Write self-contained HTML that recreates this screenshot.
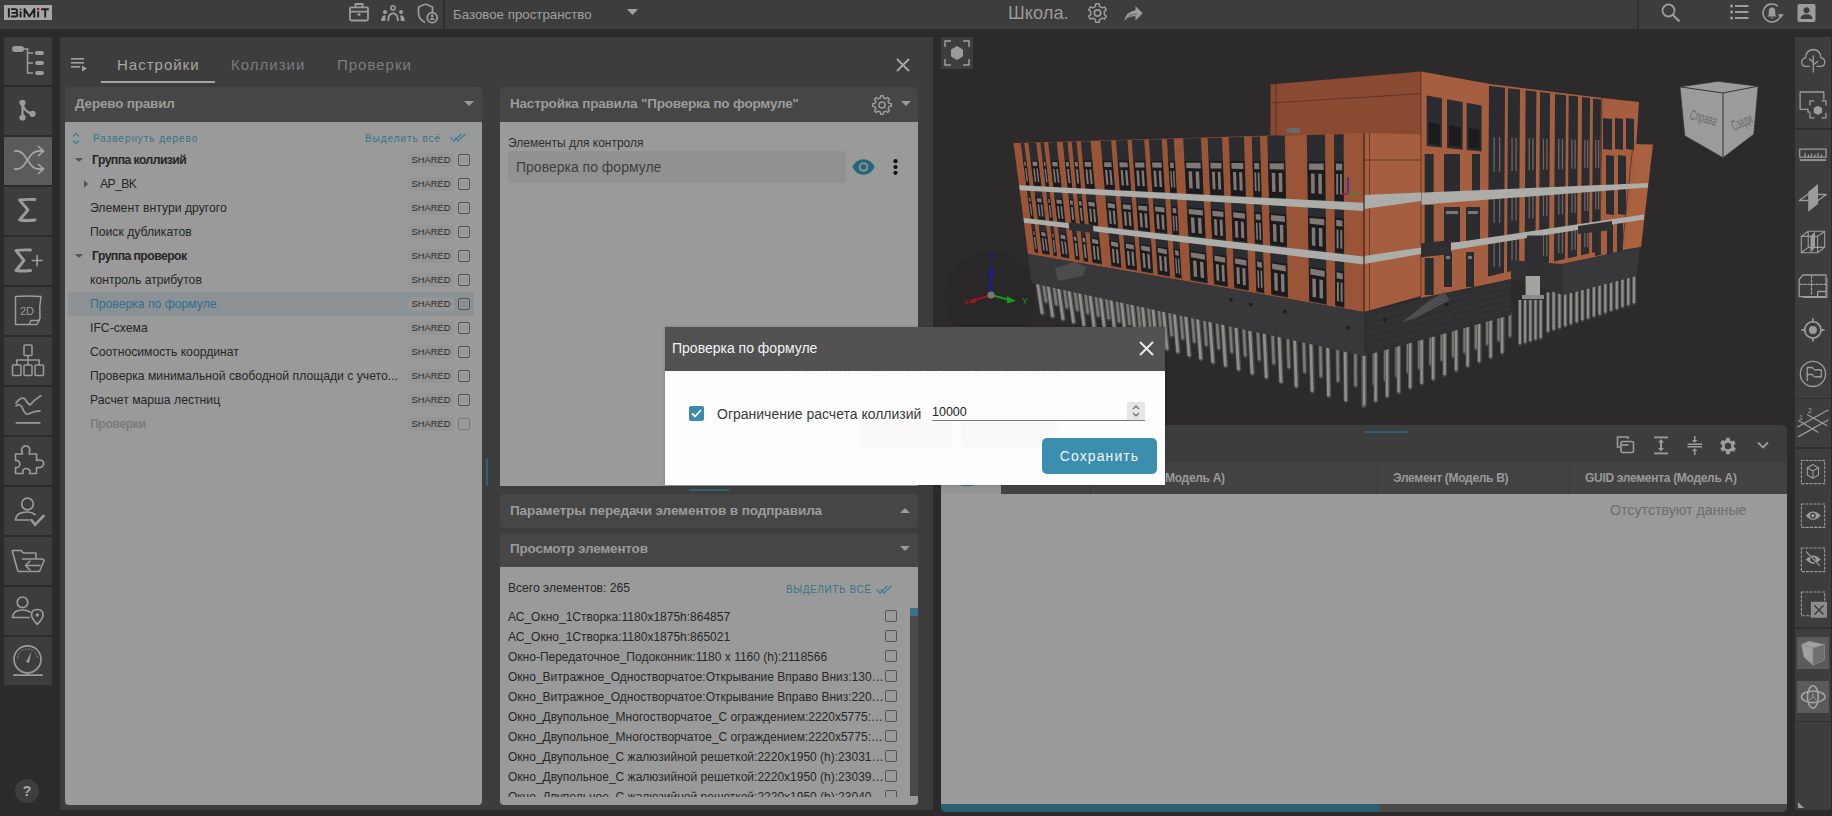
<!DOCTYPE html>
<html><head><meta charset="utf-8">
<style>
*{box-sizing:border-box;margin:0;padding:0}
html,body{width:1832px;height:816px;overflow:hidden;background:#2d2a2c;font-family:"Liberation Sans",sans-serif;position:relative}
.a{position:absolute}
svg{position:absolute;overflow:visible}
#top{left:0;top:0;width:1832px;height:29px;background:#3d3d3d}
.sb{position:absolute;left:4px;width:48px;height:48px;background:#3d3d3d}
.sb.on{background:#5b5b5b}
#main{left:60px;top:37px;width:873px;height:773px;background:#3d3d3d}
.ph{position:absolute;background:#464646;border-radius:4px 4px 0 0}
.pb{position:absolute;background:#9a9a9a}
.pt{position:absolute;font-weight:bold;font-size:13.5px;color:#9c9c9c;white-space:nowrap;letter-spacing:-0.2px}
#tree{left:0;top:0}
.row{position:absolute;left:68px;width:406px;height:24px}
.row.sel{background:#8c9195}
.row .t{position:absolute;left:22px;top:5px;font-size:12.2px;color:#262626;white-space:nowrap}
.row.grp .t{left:24px;font-weight:bold;letter-spacing:-0.55px}
.row.sub .t{left:32px;letter-spacing:-0.6px}
.row.sel .t{color:#317087}
.row.dis .t{color:#7b7b7b;font-weight:bold;letter-spacing:-0.4px}
.tri{position:absolute;width:0;height:0}
.tri.d{left:7px;top:10px;border-left:4px solid transparent;border-right:4px solid transparent;border-top:4px solid #555}
.tri.r{left:16px;top:8px;border-top:4px solid transparent;border-bottom:4px solid transparent;border-left:4px solid #555}
.chip{position:absolute;left:340px;top:5px;width:46px;height:14px;border-radius:4px;background:#959595;font-size:9.3px;color:#2a2a2a;text-align:center;line-height:15.5px;letter-spacing:0.05px}
.cb{position:absolute;left:390px;top:6px;width:12px;height:12px;border:1.5px solid #555;border-radius:2px}
.row.dis .cb{border-color:#777}
#list{left:0;top:0}
.li{position:absolute;left:508px;width:376px;overflow:hidden;text-overflow:ellipsis;font-size:12px;color:#262626;white-space:nowrap;line-height:16px}
.lcb{position:absolute;left:885px;width:12px;height:12px;border:1.5px solid #555;border-radius:2px}
.rb{position:absolute;left:1795px;width:37px;background:#3d3d3d}

</style></head><body>
<div id="top" class="a"></div>
<div class="sb" style="top:37px"></div><div class="sb" style="top:87px"></div><div class="sb on" style="top:137px"></div><div class="sb" style="top:187px"></div><div class="sb" style="top:237px"></div><div class="sb" style="top:287px"></div><div class="sb" style="top:337px"></div><div class="sb" style="top:387px"></div><div class="sb" style="top:437px"></div><div class="sb" style="top:487px"></div><div class="sb" style="top:537px"></div><div class="sb" style="top:587px"></div><div class="sb" style="top:637px"></div>
<div class="a" style="left:4px;top:5px;width:48px;height:15px;background:#a5a5a5"></div>
<svg style="left:4px;top:5px" width="48" height="15" viewBox="0 0 48 15"><g fill="none" stroke="#1e1e1e" stroke-width="1.9" stroke-linejoin="round"><path d="M4.85 3.2V12.4"/><path d="M7 4.1H11.3Q13 4.1 13 6Q13 7.9 11.3 7.9H7.6M7.6 7.9H11.6Q13.3 7.9 13.3 10Q13.3 11.5 11.6 11.5H7"/><path d="M16.6 6.3V12.4"/><path d="M20.5 12.4V4L25.4 11.6L30.3 4V12.4"/><path d="M34.15 6.3V12.4"/><path d="M37.2 4.3H44.9M41.2 4.3V12.4"/></g><rect x="15.7" y="3.7" width="1.8" height="1.3" fill="#1e1e1e"/><rect x="33.1" y="3" width="2.1" height="2.1" fill="#b00000"/></svg>
<svg style="left:349px;top:3px" width="20" height="19" viewBox="0 0 20 19"><g fill="none" stroke="#9c9c9c" stroke-width="1.8"><rect x="1" y="4.3" width="18" height="13.2" rx="1.2"/><path d="M6.5 4.3V1H13.5V4.3M1 8.7H19"/></g><rect x="8.6" y="10.3" width="2.8" height="2.4" fill="#9c9c9c"/></svg>
<svg style="left:381px;top:4px" width="25" height="18" viewBox="0 0 25 18"><g fill="#9c9c9c"><circle cx="12" cy="3.9" r="2.1" fill="none" stroke="#9c9c9c" stroke-width="1.6"/><circle cx="4" cy="8.1" r="2"/><circle cx="20" cy="8.1" r="2"/><path d="M6.2 16.9Q6.2 8.4 12 8.4Q17.8 8.4 17.8 16.9H15.9Q15.9 10.3 12 10.3Q8.1 10.3 8.1 16.9Z"/><path d="M0.3 16.9Q0.3 12 3.5 11.3L4.8 11.8Q4.2 13.5 4.2 16.9Z"/><path d="M23.7 16.9Q23.7 12 20.5 11.3L19.2 11.8Q19.8 13.5 19.8 16.9Z"/></g></svg>
<svg style="left:417px;top:3px" width="22" height="21" viewBox="0 0 22 21"><g fill="none" stroke="#9c9c9c" stroke-width="1.7"><path d="M8.5 1L1.5 4V10Q1.5 16 8 19.5"/><path d="M8.5 1L15.5 4V9"/><circle cx="15.2" cy="14.7" r="5"/></g><g fill="#9c9c9c"><circle cx="15.2" cy="13" r="1.4"/><path d="M12.6 17Q12.8 14.9 15.2 14.9Q17.6 14.9 17.8 17Z"/></g></svg>
<div class="a" style="left:443px;top:0;width:2px;height:29px;background:#303030"></div>
<div class="a" style="left:453px;top:6.7px;font-size:13.3px;color:#a0a0a0">Базовое пространство</div>
<svg style="left:627px;top:9px" width="11" height="7"><path d="M0 0H11L5.5 6Z" fill="#a0a0a0"/></svg>
<div class="a" style="left:1008px;top:2px;font-size:18.3px;color:#9a9a9a">Школа.</div>
<svg style="left:1087px;top:3px" width="21" height="20" viewBox="0 0 20 20"><path d="M7.95 3.31L8.23 0.87L11.77 0.87L12.05 3.31L14.77 4.88L17.02 3.90L18.79 6.97L16.82 8.43L16.82 11.57L18.79 13.03L17.02 16.10L14.77 15.12L12.05 16.69L11.77 19.13L8.23 19.13L7.95 16.69L5.23 15.12L2.98 16.10L1.21 13.03L3.18 11.57L3.18 8.43L1.21 6.97L2.98 3.90L5.23 4.88Z" fill="none" stroke="#9c9c9c" stroke-width="1.5" stroke-linejoin="round"/><circle cx="10" cy="10" r="3.2" fill="none" stroke="#9c9c9c" stroke-width="1.7"/></svg>
<svg style="left:1124px;top:6px" width="19" height="15" viewBox="0 0 19 15"><path d="M11.5 0L18.7 7.2L11.5 14.5V10.3Q4 10 0.3 15Q2 5.5 11.5 4.2Z" fill="#9c9c9c"/><path d="M3 12Q6 8 13 8.3" stroke="#555" stroke-width="0.8" fill="none"/></svg>
<div class="a" style="left:1637px;top:0;width:2px;height:29px;background:#303030"></div>
<svg style="left:1661px;top:3px" width="20" height="20" viewBox="0 0 20 20"><g fill="none" stroke="#9c9c9c" stroke-width="1.8"><circle cx="7.5" cy="7.5" r="6"/><path d="M12 12L18.5 18.5" stroke-width="2.2"/></g></svg>
<svg style="left:1730px;top:4px" width="19" height="17" viewBox="0 0 19 17"><g fill="#9c9c9c"><circle cx="1.6" cy="2" r="1.5"/><circle cx="1.6" cy="8" r="1.5"/><circle cx="1.6" cy="14" r="1.5"/><rect x="5" y="1" width="13.5" height="2"/><rect x="5" y="7" width="13.5" height="2"/><rect x="5" y="13" width="13.5" height="2"/></g></svg>
<svg style="left:1762px;top:3px" width="22" height="20" viewBox="0 0 22 20"><path d="M15.8 3.1A9 9 0 1 0 18.9 11.6" fill="none" stroke="#9c9c9c" stroke-width="1.6"/><path d="M15.6 11.3H22L18.8 15.2Z" fill="#9c9c9c"/><path d="M10 4.3Q6.7 4.8 6.7 8.5V12L5.3 13.5H14.7L13.3 12V8.5Q13.3 4.8 10 4.3ZM8.7 14.4Q9 15.6 10 15.6Q11 15.6 11.3 14.4Z" fill="#9c9c9c"/></svg>
<svg style="left:1797px;top:4px" width="19" height="18" viewBox="0 0 19 18"><rect x="0.5" y="0" width="18" height="18" rx="2" fill="#9c9c9c"/><circle cx="9.5" cy="6.3" r="3" fill="#3d3d3d"/><path d="M3.5 15Q3.5 10.3 9.5 10.3Q15.5 10.3 15.5 15Z" fill="#3d3d3d"/></svg>

<svg style="left:4px;top:37px" width="48" height="48" viewBox="0 0 48 48"><g fill="#9b9b9b" stroke="#9b9b9b"><rect x="8" y="9" width="12" height="6" rx="3" stroke="none"/><path d="M19 12H23.5V36.5M23.5 16H29M23.5 26H29M23.5 36H29" fill="none" stroke-width="1.6"/><rect x="31" y="14" width="9" height="4" rx="2" stroke="none"/><rect x="31" y="24" width="9" height="4" rx="2" stroke="none"/><rect x="31" y="34" width="9" height="4" rx="2" stroke="none"/></g></svg>
<svg style="left:4px;top:87px" width="48" height="48" viewBox="0 0 48 48"><g fill="#9b9b9b" stroke="#9b9b9b" stroke-width="2.2"><path d="M18.5 16V30.5M18.5 17Q20 25 28.6 26.8" fill="none"/><circle cx="18.5" cy="15.8" r="3.1" stroke="none"/><circle cx="18.5" cy="30.5" r="3.1" stroke="none"/><circle cx="28.6" cy="26.8" r="3.1" stroke="none"/></g></svg>
<svg style="left:4px;top:137px" width="48" height="48" viewBox="0 0 48 48"><g fill="none" stroke="#a9a9a9" stroke-width="1.6"><path d="M10 14Q16 13 20 18L27 28Q31 33 39 32M10 32Q16 33 20 28L27 18Q31 13 39 14M34 9L39.5 14L34 19M34 27L39.5 32L34 37"/></g></svg>
<svg style="left:4px;top:187px" width="48" height="48" viewBox="0 0 48 48"><path d="M15.5 13Q23 12 31 12.5M15.5 13L24 23L15.5 33Q23 34 31 33" fill="none" stroke="#9b9b9b" stroke-width="2.9" stroke-linecap="round" stroke-linejoin="round"/></svg>
<svg style="left:4px;top:237px" width="48" height="48" viewBox="0 0 48 48"><g fill="none" stroke="#9b9b9b" stroke-linecap="round" stroke-linejoin="round"><path d="M12 13.5Q19 12.5 26.5 13M12 13.5L20 23.5L12 33.5Q19 34.5 26.5 33.5" stroke-width="2.9"/><path d="M28.5 23.5H38M33.2 18.5V28.5" stroke-width="1.7"/></g></svg>
<svg style="left:4px;top:287px" width="48" height="48" viewBox="0 0 48 48"><g fill="none" stroke="#9b9b9b" stroke-width="1.5"><path d="M11.5 9.5Q24 8.5 37 9.5Q35 20 36 31L33 37.5H11.5Z"/><path d="M25 37.5L27 33.5H36" /></g><text x="16" y="28" font-family="Liberation Sans" font-size="11" fill="#9b9b9b">2D</text></svg>
<svg style="left:4px;top:337px" width="48" height="48" viewBox="0 0 48 48"><g fill="none" stroke="#9b9b9b" stroke-width="1.5"><rect x="20" y="8" width="8" height="10.5" rx="1"/><rect x="8.5" y="28" width="8.5" height="10.5" rx="1"/><rect x="20" y="28" width="8" height="10.5" rx="1"/><rect x="31" y="28" width="8.5" height="10.5" rx="1"/><path d="M24 18.5V28M12.7 28V23H35.2V28"/></g></svg>
<svg style="left:4px;top:387px" width="48" height="48" viewBox="0 0 48 48"><g fill="none" stroke="#9b9b9b" stroke-width="1.7" stroke-linecap="round"><path d="M12 16.2Q17 9 21 12Q24 17 26 18Q30 13 37 8.6M12 19Q15 16 18 20Q21 28 24 27Q30 24 36 23.8M12.3 35.8H35.8"/></g></svg>
<svg style="left:4px;top:437px" width="48" height="48" viewBox="0 0 48 48"><path d="M11.5 17H18.5Q17 13 18 11Q20 8.5 23 9Q26 10 25.8 13.5Q25 15.5 25 17H32.5V23.5Q36 22.5 38.5 23.8Q40.5 26 39 29Q37.5 31 32.5 30.5V36.5H25.5Q26.5 33 25 32.5Q22 30.5 19.5 32.5Q18.5 34 19 36.5H11.5V30.5Q14.5 31 15.5 29Q16.5 26 14.5 24Q12.5 23 11.5 23.5Z" fill="none" stroke="#9b9b9b" stroke-width="1.6" stroke-linejoin="round"/></svg>
<svg style="left:4px;top:487px" width="48" height="48" viewBox="0 0 48 48"><g fill="none" stroke="#9b9b9b" stroke-width="1.7" stroke-linecap="round"><circle cx="23.5" cy="17" r="5.8"/><path d="M11.5 33Q12 25 23.5 25Q28 25 31 27.5M11.5 33H25"/><path d="M27.5 33L31 37.8L39.5 29" stroke-width="2.6"/></g></svg>
<svg style="left:4px;top:537px" width="48" height="48" viewBox="0 0 48 48"><g fill="none" stroke="#9b9b9b" stroke-width="1.6" stroke-linejoin="round"><path d="M14 34.5L8.5 15V13.5H17L19.5 16H32V21.5M14 34.5H35.5L40 24Q40 22 38 22H18"/><path d="M36 28.5H21.5M26 24L21.5 28.5L26 33" stroke-linecap="round"/></g></svg>
<svg style="left:4px;top:587px" width="48" height="48" viewBox="0 0 48 48"><g fill="none" stroke="#9b9b9b" stroke-width="1.7" stroke-linecap="round"><circle cx="18.5" cy="15.3" r="5.3"/><path d="M8.5 30.5Q9 23 18.5 23Q23 23 26 25M8.5 30.5H25"/><path d="M33.3 37.3Q27.5 31.5 27.5 28Q27.5 22.5 33.3 22.5Q39 22.5 39 28Q39 31.5 33.3 37.3Z"/></g><circle cx="33.3" cy="28" r="1.7" fill="#9b9b9b"/></svg>
<svg style="left:4px;top:637px" width="48" height="48" viewBox="0 0 48 48"><g fill="none" stroke="#9b9b9b" stroke-width="1.7"><circle cx="23.5" cy="22.3" r="13.5"/><path d="M23.5 35.8V38M9.2 38.2H38.8"/><path d="M13.5 21Q15 12.5 23.5 12Q32 12.5 33.5 21" stroke-width="1" stroke-dasharray="1.5 1.5"/></g><path d="M22 25L27.5 14.5L25 26Z" fill="#9b9b9b"/></svg>
<div class="a" style="left:15px;top:779px;width:24px;height:24px;border-radius:12px;background:#3d3d3d;color:#a8a8a8;font-size:14px;font-weight:bold;text-align:center;line-height:24px">?</div>

<div id="main" class="a"></div>
<!-- tabs -->
<svg style="left:71px;top:57px" width="20" height="18" viewBox="0 0 20 18"><g fill="#a0a0a0"><rect x="0" y="1" width="13" height="1.6"/><rect x="0" y="5" width="13" height="1.6"/><rect x="0" y="9" width="9" height="1.6"/><path d="M11 8.5 L16 11.5 L11 14.5Z"/></g></svg>
<div class="a" style="left:117px;top:56px;font-size:15px;color:#a5a5a5;letter-spacing:1px">Настройки</div>
<div class="a" style="left:231px;top:56px;font-size:15px;color:#7c7c7c;letter-spacing:1px">Коллизии</div>
<div class="a" style="left:337px;top:56px;font-size:15px;color:#7c7c7c;letter-spacing:1px">Проверки</div>
<div class="a" style="left:101px;top:81px;width:114px;height:2px;background:#a3a3a3"></div>
<svg style="left:896px;top:58px" width="14" height="14" viewBox="0 0 14 14"><path d="M1 1L13 13M13 1L1 13" stroke="#a8a8a8" stroke-width="1.8"/></svg>
<!-- left panel -->
<div class="ph" style="left:65px;top:87px;width:417px;height:35px"></div>
<div class="pt" style="left:75px;top:96px">Дерево правил</div>
<svg style="left:464px;top:101px" width="10" height="6"><path d="M0 0H10L5 5Z" fill="#9a9a9a"/></svg>
<div class="pb" style="left:65px;top:122px;width:417px;height:683px;border-radius:0 0 4px 4px"></div>
<svg style="left:72px;top:132px" width="8" height="13" viewBox="0 0 8 13"><path d="M1 4.5L4 1.5L7 4.5M1 8.5L4 11.5L7 8.5" stroke="#3f7f95" stroke-width="1.4" fill="none"/></svg>
<div class="a" style="left:93px;top:133px;font-size:10px;color:#357389;letter-spacing:0.95px">Развернуть дерево</div>
<div class="a" style="left:365px;top:133px;font-size:10px;color:#357389;letter-spacing:0.95px">Выделить всё</div>
<svg style="left:450px;top:133px" width="16" height="9" viewBox="0 0 16 9"><path d="M0.5 4.5L4 8L11.5 0.8M5 4.5L8 8L15.5 0.8" stroke="#3f7f95" stroke-width="1.3" fill="none"/></svg>
<!-- middle panel -->
<div class="ph" style="left:500px;top:87px;width:418px;height:35px"></div>
<div class="pt" style="left:510px;top:96px">Настройка правила "Проверка по формуле"</div>
<div class="pb" style="left:500px;top:122px;width:418px;height:364px"></div>
<div class="a" style="left:508px;top:136px;font-size:12px;color:#2e2e2e">Элементы для контроля</div>
<div class="a" style="left:508px;top:151px;width:338px;height:32px;background:#919191;border-radius:3px"></div>
<div class="a" style="left:516px;top:159px;font-size:14px;color:#3e3e3e">Проверка по формуле</div>
<div class="ph" style="left:500px;top:494px;width:418px;height:34px;border-radius:4px"></div>
<div class="pt" style="left:510px;top:503px;letter-spacing:-0.1px">Параметры передачи элементов в подправила</div>
<svg style="left:900px;top:508px" width="10" height="6"><path d="M0 5H10L5 0Z" fill="#9a9a9a"/></svg>
<div class="ph" style="left:500px;top:533px;width:418px;height:34px"></div>
<div class="pt" style="left:510px;top:541px">Просмотр элементов</div>
<svg style="left:900px;top:546px" width="10" height="6"><path d="M0 0H10L5 5Z" fill="#9a9a9a"/></svg>
<div class="pb" style="left:500px;top:567px;width:418px;height:238px;border-radius:0 0 4px 4px"></div>
<div class="a" style="left:508px;top:581px;font-size:12.1px;color:#262626">Всего элементов: 265</div>
<div class="a" style="left:786px;top:584px;font-size:10px;color:#357389;letter-spacing:0.6px">ВЫДЕЛИТЬ ВСЁ</div>
<svg style="left:876px;top:585px" width="16" height="9" viewBox="0 0 16 9"><path d="M0.5 4.5L4 8L11.5 0.8M5 4.5L8 8L15.5 0.8" stroke="#3f7f95" stroke-width="1.3" fill="none"/></svg>
<div class="a" style="left:910px;top:608px;width:8px;height:188px;background:#4a4a4a"></div>
<div class="a" style="left:910px;top:608px;width:8px;height:8px;background:#3a6f84"></div>
<div class="a" style="left:486px;top:459px;width:1.5px;height:27px;background:#2e6272"></div>
<div class="a" style="left:689px;top:489px;width:40px;height:2px;background:#2e6272"></div>
<svg style="left:871px;top:94px" width="22" height="22" viewBox="0 0 22 22"><path d="M9.38 3.98L9.69 1.69L12.31 1.69L12.62 3.98L14.82 4.89L16.66 3.49L18.51 5.34L17.11 7.18L18.02 9.38L20.31 9.69L20.31 12.31L18.02 12.62L17.11 14.82L18.51 16.66L16.66 18.51L14.82 17.11L12.62 18.02L12.31 20.31L9.69 20.31L9.38 18.02L7.18 17.11L5.34 18.51L3.49 16.66L4.89 14.82L3.98 12.62L1.69 12.31L1.69 9.69L3.98 9.38L4.89 7.18L3.49 5.34L5.34 3.49L7.18 4.89Z" fill="none" stroke="#9a9a9a" stroke-width="1.5" stroke-linejoin="round"/><circle cx="11" cy="11" r="3.1" fill="none" stroke="#9a9a9a" stroke-width="1.5"/></svg>
<svg style="left:901px;top:101px" width="10" height="6"><path d="M0 0H10L5 5Z" fill="#9a9a9a"/></svg>
<svg style="left:852px;top:159px" width="23" height="16" viewBox="0 0 23 16"><path d="M0.3 8Q4 0.3 11.5 0.3Q19 0.3 22.7 8Q19 15.7 11.5 15.7Q4 15.7 0.3 8Z" fill="#28667a"/><circle cx="11.5" cy="8" r="4.6" fill="#9c9c9c"/><circle cx="11.5" cy="8" r="3" fill="#28667a"/></svg>
<svg style="left:893px;top:159px" width="5" height="17"><circle cx="2.5" cy="2.2" r="2.1" fill="#111"/><circle cx="2.5" cy="8" r="2.1" fill="#111"/><circle cx="2.5" cy="13.8" r="2.1" fill="#111"/></svg>

<div id="tree" class="a"><div class="row grp" style="top:148px"><i class="tri d"></i><span class="t">Группа коллизий</span><span class="chip">SHARED</span><span class="cb"></span></div><div class="row sub" style="top:172px"><i class="tri r"></i><span class="t">AP_BK</span><span class="chip">SHARED</span><span class="cb"></span></div><div class="row leaf" style="top:196px"><span class="t">Элемент внтури другого</span><span class="chip">SHARED</span><span class="cb"></span></div><div class="row leaf" style="top:220px"><span class="t">Поиск дубликатов</span><span class="chip">SHARED</span><span class="cb"></span></div><div class="row grp" style="top:244px"><i class="tri d"></i><span class="t">Группа проверок</span><span class="chip">SHARED</span><span class="cb"></span></div><div class="row leaf" style="top:268px"><span class="t">контроль атрибутов</span><span class="chip">SHARED</span><span class="cb"></span></div><div class="row sel" style="top:292px"><span class="t">Проверка по формуле</span><span class="chip">SHARED</span><span class="cb"></span></div><div class="row leaf" style="top:316px"><span class="t">IFC-схема</span><span class="chip">SHARED</span><span class="cb"></span></div><div class="row leaf" style="top:340px"><span class="t">Соотносимость координат</span><span class="chip">SHARED</span><span class="cb"></span></div><div class="row leaf" style="top:364px"><span class="t">Проверка минимальной свободной площади с учето...</span><span class="chip">SHARED</span><span class="cb"></span></div><div class="row leaf" style="top:388px"><span class="t">Расчет марша лестниц</span><span class="chip">SHARED</span><span class="cb"></span></div><div class="row dis" style="top:412px"><span class="t">Проверки</span><span class="chip">SHARED</span><span class="cb"></span></div></div>
<div id="list" class="a" style="left:0;top:0;width:1832px;height:797px;overflow:hidden"><div class="li" style="top:609px">АС_Окно_1Створка:1180x1875h:864857</div><div class="lcb" style="top:610px"></div><div class="li" style="top:629px">АС_Окно_1Створка:1180x1875h:865021</div><div class="lcb" style="top:630px"></div><div class="li" style="top:649px">Окно-Передаточное_Подоконник:1180 x 1160 (h):2118566</div><div class="lcb" style="top:650px"></div><div class="li" style="top:669px">Окно_Витражное_Одностворчатое:Открывание Вправо Вниз:1300000000000</div><div class="lcb" style="top:670px"></div><div class="li" style="top:689px">Окно_Витражное_Одностворчатое:Открывание Вправо Вниз:2200000000000</div><div class="lcb" style="top:690px"></div><div class="li" style="top:709px">Окно_Двупольное_Многостворчатое_С ограждением:2220x5775:0000000000</div><div class="lcb" style="top:710px"></div><div class="li" style="top:729px">Окно_Двупольное_Многостворчатое_С ограждением:2220x5775:0000000000</div><div class="lcb" style="top:730px"></div><div class="li" style="top:749px">Окно_Двупольное_С жалюзийной решеткой:2220x1950 (h):230310000000000</div><div class="lcb" style="top:750px"></div><div class="li" style="top:769px">Окно_Двупольное_С жалюзийной решеткой:2220x1950 (h):230390000000000</div><div class="lcb" style="top:770px"></div><div class="li" style="top:789px">Окно_Двупольное_С жалюзийной решеткой:2220x1950 (h):230400000000000</div><div class="lcb" style="top:790px"></div></div>
<div class="a" style="left:941px;top:37px;width:854px;height:388px;background:#2d2a2c"></div>
<svg style="left:0;top:0" width="1832" height="816" viewBox="0 0 1832 816"><defs><clipPath id="vc"><rect x="941" y="37" width="854" height="388"/></clipPath></defs>
<g clip-path="url(#vc)">
<circle cx="990" cy="296" r="45" fill="#292728"/>
<path d="M1041.0 282.1L1044.0 302.1L1046.2 304.6L1048.4 302.1L1045.4 282.1Z" fill="#4e4e4d"/><path d="M1041.8 282.1L1044.8 302.1H1047.2L1044.2 282.1Z" fill="#7a7a77"/><path d="M1051.5 284.4L1054.4 305.0L1056.6 307.5L1058.8 305.0L1055.9 284.4Z" fill="#4e4e4d"/><path d="M1052.3 284.4L1055.2 305.0H1057.7L1054.7 284.4Z" fill="#7a7a77"/><path d="M1062.0 286.7L1064.9 307.8L1067.1 310.3L1069.3 307.8L1066.4 286.7Z" fill="#4e4e4d"/><path d="M1062.8 286.7L1065.7 307.8H1068.1L1065.2 286.7Z" fill="#7a7a77"/><path d="M1072.5 289.0L1075.4 310.6L1077.6 313.1L1079.8 310.6L1076.9 289.0Z" fill="#4e4e4d"/><path d="M1073.3 289.0L1076.2 310.6H1078.6L1075.7 289.0Z" fill="#7a7a77"/><path d="M1083.0 291.3L1085.8 313.4L1088.0 315.9L1090.2 313.4L1087.4 291.3Z" fill="#4e4e4d"/><path d="M1083.8 291.3L1086.6 313.4H1089.1L1086.2 291.3Z" fill="#7a7a77"/><path d="M1093.5 293.6L1096.3 316.3L1098.5 318.8L1100.7 316.3L1097.9 293.6Z" fill="#4e4e4d"/><path d="M1094.3 293.6L1097.1 316.3H1099.5L1096.7 293.6Z" fill="#7a7a77"/><path d="M1104.0 295.9L1106.7 319.1L1108.9 321.6L1111.1 319.1L1108.4 295.9Z" fill="#4e4e4d"/><path d="M1104.8 295.9L1107.5 319.1H1110.0L1107.2 295.9Z" fill="#7a7a77"/><path d="M1114.5 298.2L1117.2 321.9L1119.4 324.4L1121.6 321.9L1118.9 298.2Z" fill="#4e4e4d"/><path d="M1115.3 298.2L1118.0 321.9H1120.4L1117.7 298.2Z" fill="#7a7a77"/><path d="M1125.0 300.5L1127.6 324.7L1129.8 327.2L1132.0 324.7L1129.4 300.5Z" fill="#4e4e4d"/><path d="M1125.8 300.5L1128.4 324.7H1130.9L1128.2 300.5Z" fill="#7a7a77"/><path d="M1135.5 302.8L1138.1 327.5L1140.3 330.0L1142.5 327.5L1139.9 302.8Z" fill="#4e4e4d"/><path d="M1136.3 302.8L1138.9 327.5H1141.3L1138.7 302.8Z" fill="#7a7a77"/><path d="M1146.0 305.1L1148.5 330.4L1150.7 332.9L1152.9 330.4L1150.4 305.1Z" fill="#4e4e4d"/><path d="M1146.8 305.1L1149.3 330.4H1151.7L1149.2 305.1Z" fill="#7a7a77"/><path d="M1156.5 307.4L1158.9 333.2L1161.1 335.7L1163.3 333.2L1160.9 307.4Z" fill="#4e4e4d"/><path d="M1157.3 307.4L1159.7 333.2H1162.2L1159.7 307.4Z" fill="#7a7a77"/><path d="M1167.3 309.8L1169.6 336.1L1171.8 338.6L1174.0 336.1L1171.7 309.8Z" fill="#4e4e4d"/><path d="M1168.1 309.8L1170.4 336.1H1172.8L1170.5 309.8Z" fill="#7a7a77"/><path d="M1178.5 312.3L1180.7 339.1L1182.9 341.6L1185.1 339.1L1182.9 312.3Z" fill="#4e4e4d"/><path d="M1179.3 312.3L1181.5 339.1H1183.9L1181.7 312.3Z" fill="#7a7a77"/><path d="M1190.1 314.8L1192.3 342.2L1194.5 344.7L1196.7 342.2L1194.5 314.8Z" fill="#4e4e4d"/><path d="M1190.9 314.8L1193.1 342.2H1195.5L1193.3 314.8Z" fill="#7a7a77"/><path d="M1202.2 317.5L1204.3 345.5L1206.5 348.0L1208.7 345.5L1206.6 317.5Z" fill="#4e4e4d"/><path d="M1203.0 317.5L1205.1 345.5H1207.5L1205.4 317.5Z" fill="#7a7a77"/><path d="M1214.8 320.2L1216.7 348.9L1218.9 351.4L1221.1 348.9L1219.2 320.2Z" fill="#4e4e4d"/><path d="M1215.6 320.2L1217.5 348.9H1220.0L1218.0 320.2Z" fill="#7a7a77"/><path d="M1227.9 323.1L1229.7 352.4L1231.9 354.9L1234.1 352.4L1232.3 323.1Z" fill="#4e4e4d"/><path d="M1228.7 323.1L1230.5 352.4H1232.9L1231.1 323.1Z" fill="#7a7a77"/><path d="M1241.5 326.1L1243.2 356.1L1245.4 358.6L1247.6 356.1L1245.9 326.1Z" fill="#4e4e4d"/><path d="M1242.3 326.1L1244.0 356.1H1246.4L1244.7 326.1Z" fill="#7a7a77"/><path d="M1255.6 329.2L1257.2 359.9L1259.4 362.4L1261.6 359.9L1260.0 329.2Z" fill="#4e4e4d"/><path d="M1256.4 329.2L1258.0 359.9H1260.4L1258.9 329.2Z" fill="#7a7a77"/><path d="M1270.4 332.4L1271.7 363.8L1273.9 366.3L1276.1 363.8L1274.8 332.4Z" fill="#4e4e4d"/><path d="M1271.2 332.4L1272.5 363.8H1274.9L1273.6 332.4Z" fill="#7a7a77"/><path d="M1285.7 335.8L1286.8 367.9L1289.0 370.4L1291.2 367.9L1290.1 335.8Z" fill="#4e4e4d"/><path d="M1286.5 335.8L1287.6 367.9H1290.1L1288.9 335.8Z" fill="#7a7a77"/><path d="M1301.6 339.3L1302.6 372.2L1304.8 374.7L1307.0 372.2L1306.0 339.3Z" fill="#4e4e4d"/><path d="M1302.4 339.3L1303.4 372.2H1305.8L1304.8 339.3Z" fill="#7a7a77"/><path d="M1318.2 342.9L1318.9 376.7L1321.1 379.2L1323.3 376.7L1322.6 342.9Z" fill="#4e4e4d"/><path d="M1319.0 342.9L1319.7 376.7H1322.1L1321.4 342.9Z" fill="#7a7a77"/><path d="M1335.4 346.7L1335.9 381.3L1338.1 383.8L1340.3 381.3L1339.8 346.7Z" fill="#4e4e4d"/><path d="M1336.2 346.7L1336.7 381.3H1339.1L1338.6 346.7Z" fill="#7a7a77"/><path d="M1353.3 350.7L1353.5 386.1L1355.7 388.6L1357.9 386.1L1357.7 350.7Z" fill="#4e4e4d"/><path d="M1354.1 350.7L1354.3 386.1H1356.7L1356.5 350.7Z" fill="#7a7a77"/><path d="M1035.0 280.8L1040.0 313.8L1042.5 316.3L1045.0 313.8L1040.0 280.8Z" fill="#4e4e4d"/><path d="M1035.8 280.8L1040.8 313.8H1043.5L1038.5 280.8Z" fill="#8e8e8a"/><path d="M1045.5 283.1L1050.4 316.7L1052.9 319.2L1055.4 316.7L1050.5 283.1Z" fill="#4e4e4d"/><path d="M1046.3 283.1L1051.2 316.7H1053.9L1049.0 283.1Z" fill="#8e8e8a"/><path d="M1056.0 285.4L1060.8 319.7L1063.3 322.2L1065.8 319.7L1061.0 285.4Z" fill="#4e4e4d"/><path d="M1056.8 285.4L1061.6 319.7H1064.4L1059.5 285.4Z" fill="#8e8e8a"/><path d="M1066.5 287.7L1071.3 322.7L1073.8 325.2L1076.3 322.7L1071.5 287.7Z" fill="#4e4e4d"/><path d="M1067.3 287.7L1072.1 322.7H1074.8L1070.0 287.7Z" fill="#8e8e8a"/><path d="M1077.0 290.0L1081.7 325.7L1084.2 328.2L1086.7 325.7L1082.0 290.0Z" fill="#4e4e4d"/><path d="M1077.8 290.0L1082.5 325.7H1085.2L1080.5 290.0Z" fill="#8e8e8a"/><path d="M1087.5 292.3L1092.1 328.7L1094.6 331.2L1097.1 328.7L1092.5 292.3Z" fill="#4e4e4d"/><path d="M1088.3 292.3L1092.9 328.7H1095.6L1091.0 292.3Z" fill="#8e8e8a"/><path d="M1098.0 294.6L1102.5 331.6L1105.0 334.1L1107.5 331.6L1103.0 294.6Z" fill="#4e4e4d"/><path d="M1098.8 294.6L1103.3 331.6H1106.0L1101.5 294.6Z" fill="#8e8e8a"/><path d="M1108.5 296.9L1112.9 334.6L1115.4 337.1L1117.9 334.6L1113.5 296.9Z" fill="#4e4e4d"/><path d="M1109.3 296.9L1113.7 334.6H1116.4L1112.0 296.9Z" fill="#8e8e8a"/><path d="M1119.0 299.2L1123.3 337.6L1125.8 340.1L1128.3 337.6L1124.0 299.2Z" fill="#4e4e4d"/><path d="M1119.8 299.2L1124.1 337.6H1126.8L1122.5 299.2Z" fill="#8e8e8a"/><path d="M1129.5 301.5L1133.7 340.6L1136.2 343.1L1138.7 340.6L1134.5 301.5Z" fill="#4e4e4d"/><path d="M1130.3 301.5L1134.5 340.6H1137.2L1133.0 301.5Z" fill="#8e8e8a"/><path d="M1140.0 303.8L1144.1 343.6L1146.6 346.1L1149.1 343.6L1145.0 303.8Z" fill="#4e4e4d"/><path d="M1140.8 303.8L1144.9 343.6H1147.6L1143.5 303.8Z" fill="#8e8e8a"/><path d="M1150.5 306.1L1154.4 346.5L1156.9 349.0L1159.4 346.5L1155.5 306.1Z" fill="#4e4e4d"/><path d="M1151.3 306.1L1155.2 346.5H1158.0L1154.0 306.1Z" fill="#8e8e8a"/><path d="M1161.0 308.4L1164.8 349.5L1167.3 352.0L1169.8 349.5L1166.0 308.4Z" fill="#4e4e4d"/><path d="M1161.8 308.4L1165.6 349.5H1168.4L1164.6 308.4Z" fill="#8e8e8a"/><path d="M1172.0 310.8L1175.6 352.6L1178.1 355.1L1180.6 352.6L1177.0 310.8Z" fill="#4e4e4d"/><path d="M1172.8 310.8L1176.4 352.6H1179.2L1175.5 310.8Z" fill="#8e8e8a"/><path d="M1183.3 313.3L1186.9 355.9L1189.4 358.4L1191.9 355.9L1188.3 313.3Z" fill="#4e4e4d"/><path d="M1184.1 313.3L1187.7 355.9H1190.4L1186.9 313.3Z" fill="#8e8e8a"/><path d="M1195.2 315.9L1198.5 359.2L1201.0 361.7L1203.5 359.2L1200.2 315.9Z" fill="#4e4e4d"/><path d="M1196.0 315.9L1199.3 359.2H1202.1L1198.7 315.9Z" fill="#8e8e8a"/><path d="M1207.5 318.6L1210.6 362.7L1213.1 365.2L1215.6 362.7L1212.5 318.6Z" fill="#4e4e4d"/><path d="M1208.3 318.6L1211.4 362.7H1214.2L1211.0 318.6Z" fill="#8e8e8a"/><path d="M1220.3 321.4L1223.2 366.3L1225.7 368.8L1228.2 366.3L1225.3 321.4Z" fill="#4e4e4d"/><path d="M1221.1 321.4L1224.0 366.3H1226.8L1223.8 321.4Z" fill="#8e8e8a"/><path d="M1233.6 324.4L1236.3 370.1L1238.8 372.6L1241.3 370.1L1238.6 324.4Z" fill="#4e4e4d"/><path d="M1234.4 324.4L1237.1 370.1H1239.9L1237.1 324.4Z" fill="#8e8e8a"/><path d="M1247.4 327.4L1249.9 374.1L1252.4 376.6L1254.9 374.1L1252.4 327.4Z" fill="#4e4e4d"/><path d="M1248.2 327.4L1250.7 374.1H1253.5L1251.0 327.4Z" fill="#8e8e8a"/><path d="M1261.8 330.6L1264.1 378.1L1266.6 380.6L1269.1 378.1L1266.8 330.6Z" fill="#4e4e4d"/><path d="M1262.6 330.6L1264.9 378.1H1267.6L1265.4 330.6Z" fill="#8e8e8a"/><path d="M1276.8 333.9L1278.7 382.4L1281.2 384.9L1283.7 382.4L1281.8 333.9Z" fill="#4e4e4d"/><path d="M1277.6 333.9L1279.5 382.4H1282.3L1280.4 333.9Z" fill="#8e8e8a"/><path d="M1292.4 337.3L1294.0 386.8L1296.5 389.3L1299.0 386.8L1297.4 337.3Z" fill="#4e4e4d"/><path d="M1293.2 337.3L1294.8 386.8H1297.6L1295.9 337.3Z" fill="#8e8e8a"/><path d="M1308.6 340.8L1309.9 391.4L1312.4 393.9L1314.9 391.4L1313.6 340.8Z" fill="#4e4e4d"/><path d="M1309.4 340.8L1310.7 391.4H1313.4L1312.1 340.8Z" fill="#8e8e8a"/><path d="M1325.4 344.5L1326.3 396.2L1328.8 398.7L1331.3 396.2L1330.4 344.5Z" fill="#4e4e4d"/><path d="M1326.2 344.5L1327.1 396.2H1329.9L1329.0 344.5Z" fill="#8e8e8a"/><path d="M1342.9 348.4L1343.5 401.1L1346.0 403.6L1348.5 401.1L1347.9 348.4Z" fill="#4e4e4d"/><path d="M1343.7 348.4L1344.3 401.1H1347.0L1346.5 348.4Z" fill="#8e8e8a"/><path d="M1361.1 352.4L1361.2 406.3L1363.7 408.8L1366.2 406.3L1366.1 352.4Z" fill="#4e4e4d"/><path d="M1361.9 352.4L1362.0 406.3H1364.8L1364.7 352.4Z" fill="#8e8e8a"/><path d="M1372.0 352.4L1372.0 384.4L1374.0 386.9L1376.0 384.4L1376.0 352.4Z" fill="#4e4e4d"/><path d="M1372.8 352.4L1372.8 384.4H1375.0L1375.0 352.4Z" fill="#767673"/><path d="M1383.3 349.1L1383.3 380.4L1385.3 382.9L1387.3 380.4L1387.3 349.1Z" fill="#4e4e4d"/><path d="M1384.1 349.1L1384.1 380.4H1386.3L1386.3 349.1Z" fill="#767673"/><path d="M1394.7 345.8L1394.7 376.4L1396.7 378.9L1398.7 376.4L1398.7 345.8Z" fill="#4e4e4d"/><path d="M1395.5 345.8L1395.5 376.4H1397.7L1397.7 345.8Z" fill="#767673"/><path d="M1406.0 342.4L1406.0 372.4L1408.0 374.9L1410.0 372.4L1410.0 342.4Z" fill="#4e4e4d"/><path d="M1406.8 342.4L1406.8 372.4H1409.0L1409.0 342.4Z" fill="#767673"/><path d="M1417.3 339.1L1417.3 368.4L1419.3 370.9L1421.3 368.4L1421.3 339.1Z" fill="#4e4e4d"/><path d="M1418.1 339.1L1418.1 368.4H1420.3L1420.3 339.1Z" fill="#767673"/><path d="M1428.7 335.8L1428.7 364.4L1430.7 366.9L1432.7 364.4L1432.7 335.8Z" fill="#4e4e4d"/><path d="M1429.5 335.8L1429.5 364.4H1431.7L1431.7 335.8Z" fill="#767673"/><path d="M1440.0 332.4L1440.0 360.4L1442.0 362.9L1444.0 360.4L1444.0 332.4Z" fill="#4e4e4d"/><path d="M1440.8 332.4L1440.8 360.4H1443.0L1443.0 332.4Z" fill="#767673"/><path d="M1451.3 329.1L1451.3 356.4L1453.3 358.9L1455.3 356.4L1455.3 329.1Z" fill="#4e4e4d"/><path d="M1452.1 329.1L1452.1 356.4H1454.3L1454.3 329.1Z" fill="#767673"/><path d="M1462.7 325.8L1462.7 352.4L1464.7 354.9L1466.7 352.4L1466.7 325.8Z" fill="#4e4e4d"/><path d="M1463.5 325.8L1463.5 352.4H1465.7L1465.7 325.8Z" fill="#767673"/><path d="M1474.0 322.4L1474.0 348.4L1476.0 350.9L1478.0 348.4L1478.0 322.4Z" fill="#4e4e4d"/><path d="M1474.8 322.4L1474.8 348.4H1477.0L1477.0 322.4Z" fill="#767673"/><path d="M1485.3 319.1L1485.3 344.4L1487.3 346.9L1489.3 344.4L1489.3 319.1Z" fill="#4e4e4d"/><path d="M1486.1 319.1L1486.1 344.4H1488.3L1488.3 319.1Z" fill="#767673"/><path d="M1496.7 315.8L1496.7 340.4L1498.7 342.9L1500.7 340.4L1500.7 315.8Z" fill="#4e4e4d"/><path d="M1497.5 315.8L1497.5 340.4H1499.7L1499.7 315.8Z" fill="#767673"/><path d="M1508.0 312.4L1508.0 336.4L1510.0 338.9L1512.0 336.4L1512.0 312.4Z" fill="#4e4e4d"/><path d="M1508.8 312.4L1508.8 336.4H1511.0L1511.0 312.4Z" fill="#767673"/><path d="M1362.0 353.6L1362.1 405.6L1364.4 408.1L1366.7 405.6L1366.6 353.6Z" fill="#4e4e4d"/><path d="M1362.8 353.6L1362.9 405.6H1365.4L1365.3 353.6Z" fill="#8e8e8a"/><path d="M1373.5 350.2L1373.5 401.2L1375.8 403.7L1378.1 401.2L1378.1 350.2Z" fill="#4e4e4d"/><path d="M1374.3 350.2L1374.3 401.2H1376.8L1376.8 350.2Z" fill="#8e8e8a"/><path d="M1385.0 346.8L1385.0 396.8L1387.3 399.3L1389.6 396.8L1389.6 346.8Z" fill="#4e4e4d"/><path d="M1385.8 346.8L1385.8 396.8H1388.3L1388.3 346.8Z" fill="#8e8e8a"/><path d="M1396.5 343.4L1396.5 392.4L1398.8 394.9L1401.1 392.4L1401.1 343.4Z" fill="#4e4e4d"/><path d="M1397.3 343.4L1397.3 392.4H1399.8L1399.8 343.4Z" fill="#8e8e8a"/><path d="M1408.0 340.1L1408.0 388.1L1410.3 390.6L1412.6 388.1L1412.6 340.1Z" fill="#4e4e4d"/><path d="M1408.8 340.1L1408.8 388.1H1411.3L1411.3 340.1Z" fill="#8e8e8a"/><path d="M1419.5 336.7L1419.5 383.7L1421.8 386.2L1424.1 383.7L1424.1 336.7Z" fill="#4e4e4d"/><path d="M1420.3 336.7L1420.3 383.7H1422.8L1422.8 336.7Z" fill="#8e8e8a"/><path d="M1431.0 333.3L1431.0 379.3L1433.3 381.8L1435.6 379.3L1435.6 333.3Z" fill="#4e4e4d"/><path d="M1431.8 333.3L1431.8 379.3H1434.3L1434.3 333.3Z" fill="#8e8e8a"/><path d="M1442.5 329.9L1442.5 374.9L1444.8 377.4L1447.1 374.9L1447.1 329.9Z" fill="#4e4e4d"/><path d="M1443.3 329.9L1443.3 374.9H1445.8L1445.8 329.9Z" fill="#8e8e8a"/><path d="M1454.0 326.5L1454.0 370.5L1456.3 373.0L1458.6 370.5L1458.6 326.5Z" fill="#4e4e4d"/><path d="M1454.8 326.5L1454.8 370.5H1457.3L1457.3 326.5Z" fill="#8e8e8a"/><path d="M1465.5 323.2L1465.5 366.2L1467.8 368.7L1470.1 366.2L1470.1 323.2Z" fill="#4e4e4d"/><path d="M1466.3 323.2L1466.3 366.2H1468.8L1468.8 323.2Z" fill="#8e8e8a"/><path d="M1477.0 319.8L1477.0 361.8L1479.3 364.3L1481.6 361.8L1481.6 319.8Z" fill="#4e4e4d"/><path d="M1477.8 319.8L1477.8 361.8H1480.3L1480.3 319.8Z" fill="#8e8e8a"/><path d="M1488.5 316.4L1488.5 357.4L1490.8 359.9L1493.1 357.4L1493.1 316.4Z" fill="#4e4e4d"/><path d="M1489.3 316.4L1489.3 357.4H1491.8L1491.8 316.4Z" fill="#8e8e8a"/><path d="M1500.0 313.0L1500.0 353.0L1502.3 355.5L1504.6 353.0L1504.6 313.0Z" fill="#4e4e4d"/><path d="M1500.8 313.0L1500.8 353.0H1503.3L1503.3 313.0Z" fill="#8e8e8a"/><path d="M1518.0 300.0L1518.0 344.0L1520.0 346.5L1522.0 344.0L1522.0 300.0Z" fill="#4e4e4d"/><path d="M1518.8 300.0L1518.8 344.0H1521.0L1521.0 300.0Z" fill="#8e8e8a"/><path d="M1523.2 300.0L1523.2 342.5L1525.2 345.0L1527.2 342.5L1527.2 300.0Z" fill="#4e4e4d"/><path d="M1524.0 300.0L1524.0 342.5H1526.2L1526.2 300.0Z" fill="#8e8e8a"/><path d="M1528.4 300.0L1528.4 341.0L1530.4 343.5L1532.4 341.0L1532.4 300.0Z" fill="#4e4e4d"/><path d="M1529.2 300.0L1529.2 341.0H1531.4L1531.4 300.0Z" fill="#8e8e8a"/><path d="M1533.6 300.0L1533.6 339.5L1535.6 342.0L1537.6 339.5L1537.6 300.0Z" fill="#4e4e4d"/><path d="M1534.4 300.0L1534.4 339.5H1536.6L1536.6 300.0Z" fill="#8e8e8a"/><path d="M1538.8 300.0L1538.8 338.0L1540.8 340.5L1542.8 338.0L1542.8 300.0Z" fill="#4e4e4d"/><path d="M1539.6 300.0L1539.6 338.0H1541.8L1541.8 300.0Z" fill="#8e8e8a"/><path d="M1546.0 292.5L1546.0 331.5L1548.1 334.0L1550.2 331.5L1550.2 292.5Z" fill="#4e4e4d"/><path d="M1546.8 292.5L1546.8 331.5H1549.1L1549.1 292.5Z" fill="#8e8e8a"/><path d="M1551.7 291.1L1551.7 329.6L1553.8 332.1L1555.9 329.6L1555.9 291.1Z" fill="#4e4e4d"/><path d="M1552.5 291.1L1552.5 329.6H1554.8L1554.8 291.1Z" fill="#8e8e8a"/><path d="M1557.5 289.7L1557.5 327.7L1559.6 330.2L1561.7 327.7L1561.7 289.7Z" fill="#4e4e4d"/><path d="M1558.3 289.7L1558.3 327.7H1560.6L1560.6 289.7Z" fill="#8e8e8a"/><path d="M1563.2 288.4L1563.2 325.8L1565.3 328.3L1567.4 325.8L1567.4 288.4Z" fill="#4e4e4d"/><path d="M1564.0 288.4L1564.0 325.8H1566.3L1566.3 288.4Z" fill="#8e8e8a"/><path d="M1568.9 287.0L1568.9 323.9L1571.0 326.4L1573.1 323.9L1573.1 287.0Z" fill="#4e4e4d"/><path d="M1569.7 287.0L1569.7 323.9H1572.0L1572.0 287.0Z" fill="#8e8e8a"/><path d="M1574.7 285.6L1574.7 322.0L1576.8 324.5L1578.9 322.0L1578.9 285.6Z" fill="#4e4e4d"/><path d="M1575.5 285.6L1575.5 322.0H1577.8L1577.8 285.6Z" fill="#8e8e8a"/><path d="M1580.4 284.3L1580.4 320.1L1582.5 322.6L1584.6 320.1L1584.6 284.3Z" fill="#4e4e4d"/><path d="M1581.2 284.3L1581.2 320.1H1583.5L1583.5 284.3Z" fill="#8e8e8a"/><path d="M1586.1 282.9L1586.1 318.2L1588.2 320.7L1590.3 318.2L1590.3 282.9Z" fill="#4e4e4d"/><path d="M1586.9 282.9L1586.9 318.2H1589.2L1589.2 282.9Z" fill="#8e8e8a"/><path d="M1591.9 281.5L1591.9 316.3L1594.0 318.8L1596.1 316.3L1596.1 281.5Z" fill="#4e4e4d"/><path d="M1592.7 281.5L1592.7 316.3H1595.0L1595.0 281.5Z" fill="#8e8e8a"/><path d="M1597.6 280.2L1597.6 314.4L1599.7 316.9L1601.8 314.4L1601.8 280.2Z" fill="#4e4e4d"/><path d="M1598.4 280.2L1598.4 314.4H1600.7L1600.7 280.2Z" fill="#8e8e8a"/><path d="M1603.3 278.8L1603.3 312.5L1605.4 315.0L1607.5 312.5L1607.5 278.8Z" fill="#4e4e4d"/><path d="M1604.1 278.8L1604.1 312.5H1606.4L1606.4 278.8Z" fill="#8e8e8a"/><path d="M1609.1 277.4L1609.1 310.6L1611.2 313.1L1613.3 310.6L1613.3 277.4Z" fill="#4e4e4d"/><path d="M1609.9 277.4L1609.9 310.6H1612.2L1612.2 277.4Z" fill="#8e8e8a"/><path d="M1614.8 276.1L1614.8 308.7L1616.9 311.2L1619.0 308.7L1619.0 276.1Z" fill="#4e4e4d"/><path d="M1615.6 276.1L1615.6 308.7H1617.9L1617.9 276.1Z" fill="#8e8e8a"/><path d="M1620.5 274.7L1620.5 306.8L1622.6 309.3L1624.7 306.8L1624.7 274.7Z" fill="#4e4e4d"/><path d="M1621.3 274.7L1621.3 306.8H1623.6L1623.6 274.7Z" fill="#8e8e8a"/><path d="M1626.3 273.3L1626.3 304.9L1628.4 307.4L1630.5 304.9L1630.5 273.3Z" fill="#4e4e4d"/><path d="M1627.1 273.3L1627.1 304.9H1629.4L1629.4 273.3Z" fill="#8e8e8a"/><path d="M1632.0 272.0L1632.0 303.0L1634.1 305.5L1636.2 303.0L1636.2 272.0Z" fill="#4e4e4d"/><path d="M1632.8 272.0L1632.8 303.0H1635.1L1635.1 272.0Z" fill="#8e8e8a"/><polygon points="1633.0,144.0 1653.0,144.5 1641.0,247.0 1622.0,250.0" fill="#a9613f" /><polygon points="1421.0,71.5 1490.0,84.0 1602.0,98.0 1639.0,102.0 1636.0,150.0 1625.0,250.0 1562.0,265.0 1512.0,279.0 1421.0,298.0" fill="#a65e40" /><polygon points="1489.0,85.8 1505.0,87.8 1504.0,272.8 1488.0,276.5" fill="#2b2c2f" /><polygon points="1493.5,137.3 1494.8,137.3 1494.8,171.6 1493.5,171.6" fill="#6d6563" /><polygon points="1498.9,137.3 1500.2,137.3 1500.2,171.6 1498.9,171.6" fill="#6d6563" /><polygon points="1493.5,192.6 1494.8,192.6 1494.8,223.1 1493.5,223.1" fill="#6d6563" /><polygon points="1498.9,192.6 1500.2,192.6 1500.2,223.1 1498.9,223.1" fill="#6d6563" /><polygon points="1493.5,238.3 1494.8,238.3 1494.8,266.9 1493.5,266.9" fill="#6d6563" /><polygon points="1498.9,238.3 1500.2,238.3 1500.2,266.9 1498.9,266.9" fill="#6d6563" /><polygon points="1508.0,88.2 1520.0,89.6 1519.0,269.4 1507.0,272.1" fill="#2b2c2f" /><polygon points="1511.4,137.8 1512.7,137.8 1512.7,171.0 1511.4,171.0" fill="#6d6563" /><polygon points="1515.4,137.8 1516.7,137.8 1516.7,171.0 1515.4,171.0" fill="#6d6563" /><polygon points="1511.4,191.2 1512.7,191.2 1512.7,220.6 1511.4,220.6" fill="#6d6563" /><polygon points="1515.4,191.2 1516.7,191.2 1516.7,220.6 1515.4,220.6" fill="#6d6563" /><polygon points="1511.4,235.3 1512.7,235.3 1512.7,262.9 1511.4,262.9" fill="#6d6563" /><polygon points="1515.4,235.3 1516.7,235.3 1516.7,262.9 1515.4,262.9" fill="#6d6563" /><polygon points="1525.6,90.3 1536.4,91.6 1535.4,265.7 1524.6,268.1" fill="#2b2c2f" /><polygon points="1528.6,138.3 1529.9,138.3 1529.9,170.3 1528.6,170.3" fill="#6d6563" /><polygon points="1532.3,138.3 1533.6,138.3 1533.6,170.3 1532.3,170.3" fill="#6d6563" /><polygon points="1528.6,189.9 1529.9,189.9 1529.9,218.3 1528.6,218.3" fill="#6d6563" /><polygon points="1532.3,189.9 1533.6,189.9 1533.6,218.3 1532.3,218.3" fill="#6d6563" /><polygon points="1528.6,232.6 1529.9,232.6 1529.9,259.2 1528.6,259.2" fill="#6d6563" /><polygon points="1532.3,232.6 1533.6,232.6 1533.6,259.2 1532.3,259.2" fill="#6d6563" /><polygon points="1540.0,92.0 1550.0,93.2 1549.0,262.5 1539.0,264.8" fill="#2b2c2f" /><polygon points="1542.8,138.7 1544.1,138.7 1544.1,169.8 1542.8,169.8" fill="#6d6563" /><polygon points="1546.2,138.7 1547.5,138.7 1547.5,169.8 1546.2,169.8" fill="#6d6563" /><polygon points="1542.8,188.8 1544.1,188.8 1544.1,216.4 1542.8,216.4" fill="#6d6563" /><polygon points="1546.2,188.8 1547.5,188.8 1547.5,216.4 1546.2,216.4" fill="#6d6563" /><polygon points="1542.8,230.3 1544.1,230.3 1544.1,256.2 1542.8,256.2" fill="#6d6563" /><polygon points="1546.2,230.3 1547.5,230.3 1547.5,256.2 1546.2,256.2" fill="#6d6563" /><polygon points="1555.0,93.9 1566.0,95.2 1565.0,258.9 1554.0,261.4" fill="#2b2c2f" /><polygon points="1558.1,139.1 1559.4,139.1 1559.4,169.3 1558.1,169.3" fill="#6d6563" /><polygon points="1561.8,139.1 1563.1,139.1 1563.1,169.3 1561.8,169.3" fill="#6d6563" /><polygon points="1558.1,187.7 1559.4,187.7 1559.4,214.5 1558.1,214.5" fill="#6d6563" /><polygon points="1561.8,187.7 1563.1,187.7 1563.1,214.5 1561.8,214.5" fill="#6d6563" /><polygon points="1558.1,227.9 1559.4,227.9 1559.4,253.0 1558.1,253.0" fill="#6d6563" /><polygon points="1561.8,227.9 1563.1,227.9 1563.1,253.0 1561.8,253.0" fill="#6d6563" /><polygon points="1568.7,95.5 1578.0,96.6 1577.0,256.2 1567.7,258.3" fill="#2b2c2f" /><polygon points="1571.3,139.5 1572.6,139.5 1572.6,168.8 1571.3,168.8" fill="#6d6563" /><polygon points="1574.5,139.5 1575.8,139.5 1575.8,168.8 1574.5,168.8" fill="#6d6563" /><polygon points="1571.3,186.7 1572.6,186.7 1572.6,212.7 1571.3,212.7" fill="#6d6563" /><polygon points="1574.5,186.7 1575.8,186.7 1575.8,212.7 1574.5,212.7" fill="#6d6563" /><polygon points="1571.3,225.7 1572.6,225.7 1572.6,250.1 1571.3,250.1" fill="#6d6563" /><polygon points="1574.5,225.7 1575.8,225.7 1575.8,250.1 1574.5,250.1" fill="#6d6563" /><polygon points="1582.0,97.1 1590.0,98.1 1589.0,253.4 1581.0,255.2" fill="#2b2c2f" /><polygon points="1584.2,139.8 1585.5,139.8 1585.5,168.3 1584.2,168.3" fill="#6d6563" /><polygon points="1587.0,139.8 1588.3,139.8 1588.3,168.3 1587.0,168.3" fill="#6d6563" /><polygon points="1584.2,185.7 1585.5,185.7 1585.5,211.0 1584.2,211.0" fill="#6d6563" /><polygon points="1587.0,185.7 1588.3,185.7 1588.3,211.0 1587.0,211.0" fill="#6d6563" /><polygon points="1584.2,223.6 1585.5,223.6 1585.5,247.3 1584.2,247.3" fill="#6d6563" /><polygon points="1587.0,223.6 1588.3,223.6 1588.3,247.3 1587.0,247.3" fill="#6d6563" /><polygon points="1593.0,98.4 1601.0,99.4 1600.0,250.9 1592.0,252.7" fill="#2b2c2f" /><polygon points="1595.2,140.1 1596.5,140.1 1596.5,167.9 1595.2,167.9" fill="#6d6563" /><polygon points="1598.0,140.1 1599.3,140.1 1599.3,167.9 1598.0,167.9" fill="#6d6563" /><polygon points="1595.2,184.8 1596.5,184.8 1596.5,209.5 1595.2,209.5" fill="#6d6563" /><polygon points="1598.0,184.8 1599.3,184.8 1599.3,209.5 1598.0,209.5" fill="#6d6563" /><polygon points="1595.2,221.9 1596.5,221.9 1596.5,245.0 1595.2,245.0" fill="#6d6563" /><polygon points="1598.0,221.9 1599.3,221.9 1599.3,245.0 1598.0,245.0" fill="#6d6563" /><polygon points="1426.7,95.5 1442.0,98.3 1442.0,147.6 1426.7,146.1" fill="#2b2c2f" /><polygon points="1428.7,121.9 1440.0,124.2 1440.0,145.1 1428.7,143.6" fill="#1c1c1e" /><polygon points="1447.0,99.2 1462.7,102.0 1462.7,149.7 1447.0,148.1" fill="#2b2c2f" /><polygon points="1449.0,124.9 1460.7,127.3 1460.7,147.2 1449.0,145.6" fill="#1c1c1e" /><polygon points="1466.7,102.7 1481.6,105.4 1481.6,151.6 1466.7,150.1" fill="#2b2c2f" /><polygon points="1468.7,127.9 1479.6,130.1 1479.6,149.1 1468.7,147.6" fill="#1c1c1e" /><polygon points="1424.7,154.0 1433.7,154.0 1433.7,197.0 1424.7,197.0" fill="#2b2c2f" /><polygon points="1424.7,205.0 1433.7,205.0 1433.7,244.0 1424.7,244.0" fill="#2b2c2f" /><polygon points="1424.7,258.0 1433.7,258.0 1433.7,295.0 1424.7,295.0" fill="#2b2c2f" /><polygon points="1444.0,154.0 1460.0,154.0 1460.0,197.0 1444.0,197.0" fill="#2b2c2f" /><polygon points="1472.0,154.0 1480.0,154.0 1480.0,197.0 1472.0,197.0" fill="#2b2c2f" /><polygon points="1444.0,207.0 1460.0,207.0 1460.0,242.0 1444.0,242.0" fill="#2b2c2f" /><polygon points="1446.0,211.0 1458.0,211.0 1458.0,214.0 1446.0,214.0" fill="#7e7673" /><polygon points="1466.0,207.0 1480.0,207.0 1480.0,242.0 1466.0,242.0" fill="#2b2c2f" /><polygon points="1468.0,211.0 1478.0,211.0 1478.0,214.0 1468.0,214.0" fill="#7e7673" /><polygon points="1444.0,252.0 1452.0,252.0 1452.0,287.0 1444.0,287.0" fill="#2b2c2f" /><polygon points="1446.0,256.0 1450.0,256.0 1450.0,259.0 1446.0,259.0" fill="#7e7673" /><polygon points="1466.0,252.0 1474.0,252.0 1474.0,287.0 1466.0,287.0" fill="#2b2c2f" /><polygon points="1468.0,256.0 1472.0,256.0 1472.0,259.0 1468.0,259.0" fill="#7e7673" /><polygon points="1603.0,118.0 1612.0,119.0 1612.0,150.0 1603.0,149.0" fill="#2b2c2f" /><polygon points="1615.0,118.0 1623.0,119.0 1623.0,150.0 1615.0,149.0" fill="#2b2c2f" /><polygon points="1626.0,118.0 1634.0,119.0 1634.0,150.0 1626.0,149.0" fill="#2b2c2f" /><polygon points="1606.0,155.0 1614.0,156.0 1614.0,215.0 1606.0,214.0" fill="#2b2c2f" /><polygon points="1618.0,155.0 1626.0,156.0 1626.0,215.0 1618.0,214.0" fill="#2b2c2f" /><polygon points="1595.0,222.0 1601.0,221.0 1601.0,255.0 1595.0,256.0" fill="#2b2c2f" /><polygon points="1607.0,222.0 1613.0,221.0 1613.0,255.0 1607.0,256.0" fill="#2b2c2f" /><polygon points="1617.0,222.0 1623.0,221.0 1623.0,255.0 1617.0,256.0" fill="#2b2c2f" /><path d="M1602 98L1600 250M1633 144L1622 250" stroke="#54301f" stroke-width="0.8" fill="none"/><polygon points="1364.0,195.0 1648.0,183.0 1648.0,187.5 1364.0,209.0" fill="#acada8" /><polygon points="1364.0,256.0 1644.0,214.5 1644.0,219.5 1364.0,264.0" fill="#acada8" /><polygon points="1396.0,246.0 1451.0,240.0 1451.0,254.0 1396.0,260.0" fill="#2f2f31" /><polygon points="1578.0,226.0 1612.0,221.0 1612.0,230.0 1578.0,234.0" fill="#2f2f31" /><polygon points="1511.0,260.0 1562.0,264.0 1640.0,247.6 1636.0,276.0 1563.0,295.0 1511.0,278.6" fill="#313133" /><polygon points="1563.0,264.0 1640.0,247.6 1636.0,276.0 1563.0,295.0" fill="#38383a" /><polygon points="1527.0,235.5 1543.0,235.5 1543.0,276.0 1527.0,276.0" fill="#303033" /><polygon points="1525.6,276.0 1540.0,276.0 1540.0,295.0 1525.6,295.0" fill="#a3a39f" /><polygon points="1522.0,295.0 1544.0,295.0 1544.0,299.0 1522.0,299.0" fill="#8a8a86" /><polygon points="1270.5,84.4 1421.0,71.5 1421.0,135.0 1270.5,135.0" fill="#8a4a31" /><path d="M1270.5 103L1421 93.7M1276 84V135M1421 71V135" stroke="#54301f" stroke-width="0.8" fill="none"/><polygon points="1287.0,128.0 1300.0,128.0 1300.0,133.0 1287.0,133.0" fill="#6a6a6c" /><polygon points="1364.0,133.0 1421.0,134.5 1421.0,296.0 1364.0,312.0" fill="#a65e40" /><path d="M1369.5 133V312M1364 160L1421 160M1421 134V296" stroke="#54301f" stroke-width="0.8" fill="none"/><polygon points="1364.0,195.0 1421.0,192.6 1421.0,201.0 1364.0,209.0" fill="#acada8" /><polygon points="1364.0,256.0 1421.0,247.5 1421.0,254.0 1364.0,264.0" fill="#acada8" /><polygon points="1013.5,143.0 1364.0,133.0 1364.0,312.0 1028.0,254.0" fill="#9a5538" /><polygon points="1020.7,143.1 1024.2,143.0 1038.2,253.0 1034.8,252.4" fill="#2b2c2f" /><polygon points="1023.3,160.4 1026.1,160.4 1029.3,185.3 1026.5,185.1" fill="#1b1b1d" /><polygon points="1024.1,161.7 1025.6,161.7 1026.1,165.9 1024.7,165.9" fill="#7f7875" /><polygon points="1025.0,168.3 1026.4,168.3 1028.1,181.4 1026.7,181.3" fill="#7f7875" /><polygon points="1027.9,196.1 1030.7,196.4 1033.4,217.9 1030.6,217.6" fill="#1b1b1d" /><polygon points="1028.7,197.4 1030.2,197.7 1030.7,201.6 1029.2,201.3" fill="#7f7875" /><polygon points="1029.6,203.6 1030.9,203.7 1032.4,215.6 1031.1,215.5" fill="#7f7875" /><polygon points="1032.2,229.7 1035.0,230.1 1037.8,252.2 1035.0,251.6" fill="#1b1b1d" /><polygon points="1033.0,230.8 1034.4,231.2 1034.9,235.1 1033.5,234.6" fill="#7f7875" /><polygon points="1033.8,236.9 1035.2,237.1 1036.7,249.3 1035.4,249.1" fill="#7f7875" /><polygon points="1028.4,142.9 1036.2,142.7 1049.7,255.1 1042.2,253.7" fill="#2b2c2f" /><polygon points="1030.9,160.4 1038.1,160.4 1041.1,185.9 1034.0,185.5" fill="#1b1b1d" /><polygon points="1032.4,161.8 1036.9,161.8 1037.4,166.1 1032.9,166.0" fill="#7f7875" /><polygon points="1033.2,168.5 1034.7,168.5 1036.3,181.7 1034.8,181.7" fill="#7f7875" /><polygon points="1036.3,168.5 1037.8,168.6 1039.4,181.9 1037.9,181.8" fill="#7f7875" /><polygon points="1035.4,196.6 1042.5,197.2 1045.1,219.2 1038.1,218.4" fill="#1b1b1d" /><polygon points="1036.9,198.0 1041.3,198.5 1041.8,202.5 1037.4,201.9" fill="#7f7875" /><polygon points="1037.6,204.2 1039.1,204.4 1040.6,216.5 1039.1,216.3" fill="#7f7875" /><polygon points="1040.6,204.5 1042.2,204.6 1043.6,216.8 1042.1,216.6" fill="#7f7875" /><polygon points="1039.7,230.7 1046.6,231.7 1049.3,254.3 1042.4,253.0" fill="#1b1b1d" /><polygon points="1041.1,231.8 1045.4,232.8 1045.9,236.8 1041.6,235.7" fill="#7f7875" /><polygon points="1041.8,238.1 1043.3,238.3 1044.8,250.7 1043.3,250.4" fill="#7f7875" /><polygon points="1044.8,238.6 1046.3,238.8 1047.8,251.2 1046.3,250.9" fill="#7f7875" /><polygon points="1040.4,142.6 1043.9,142.5 1057.1,256.4 1053.7,255.8" fill="#2b2c2f" /><polygon points="1042.8,160.5 1045.7,160.5 1048.7,186.3 1045.8,186.1" fill="#1b1b1d" /><polygon points="1043.7,161.8 1045.2,161.8 1045.7,166.2 1044.2,166.2" fill="#7f7875" /><polygon points="1044.5,168.7 1045.9,168.7 1047.5,182.2 1046.1,182.1" fill="#7f7875" /><polygon points="1047.2,197.5 1050.0,197.7 1052.6,220.1 1049.8,219.7" fill="#1b1b1d" /><polygon points="1048.0,198.8 1049.5,199.1 1049.9,203.1 1048.5,202.8" fill="#7f7875" /><polygon points="1048.8,205.2 1050.2,205.3 1051.6,217.7 1050.2,217.5" fill="#7f7875" /><polygon points="1051.3,232.2 1054.0,232.7 1056.7,255.6 1053.9,255.0" fill="#1b1b1d" /><polygon points="1052.1,233.4 1053.5,233.8 1053.9,237.8 1052.6,237.3" fill="#7f7875" /><polygon points="1052.8,239.8 1054.2,240.0 1055.7,252.6 1054.3,252.3" fill="#7f7875" /><polygon points="1048.2,142.4 1056.7,142.1 1069.4,258.6 1061.2,257.1" fill="#2b2c2f" /><polygon points="1050.6,160.5 1058.4,160.5 1061.3,186.9 1053.5,186.5" fill="#1b1b1d" /><polygon points="1052.0,161.9 1057.3,161.9 1057.8,166.4 1052.5,166.3" fill="#7f7875" /><polygon points="1052.9,168.8 1054.6,168.9 1056.1,182.6 1054.4,182.5" fill="#7f7875" /><polygon points="1056.3,168.9 1058.0,168.9 1059.5,182.7 1057.8,182.6" fill="#7f7875" /><polygon points="1054.8,198.0 1062.6,198.6 1065.0,221.5 1057.4,220.5" fill="#1b1b1d" /><polygon points="1056.3,199.4 1061.4,200.0 1061.9,204.1 1056.7,203.4" fill="#7f7875" /><polygon points="1057.1,205.9 1058.7,206.0 1060.1,218.6 1058.5,218.4" fill="#7f7875" /><polygon points="1060.4,206.2 1062.0,206.3 1063.4,218.9 1061.8,218.8" fill="#7f7875" /><polygon points="1058.8,233.2 1066.4,234.3 1069.0,257.8 1061.4,256.3" fill="#1b1b1d" /><polygon points="1060.2,234.4 1065.3,235.5 1065.7,239.6 1060.7,238.4" fill="#7f7875" /><polygon points="1061.0,241.0 1062.6,241.2 1064.1,254.0 1062.4,253.7" fill="#7f7875" /><polygon points="1064.3,241.5 1065.9,241.7 1067.3,254.6 1065.7,254.3" fill="#7f7875" /><polygon points="1062.7,142.0 1067.5,141.8 1079.7,260.5 1075.1,259.6" fill="#2b2c2f" /><polygon points="1065.0,160.5 1069.2,160.6 1071.9,187.4 1067.8,187.2" fill="#1b1b1d" /><polygon points="1065.8,162.0 1068.6,162.0 1069.1,166.5 1066.3,166.5" fill="#7f7875" /><polygon points="1067.0,169.1 1068.9,169.1 1070.4,183.2 1068.5,183.1" fill="#7f7875" /><polygon points="1069.0,199.0 1073.1,199.3 1075.5,222.6 1071.5,222.1" fill="#1b1b1d" /><polygon points="1069.9,200.4 1072.6,200.8 1073.0,205.0 1070.3,204.6" fill="#7f7875" /><polygon points="1071.0,207.1 1072.9,207.2 1074.2,220.1 1072.3,219.9" fill="#7f7875" /><polygon points="1072.8,235.1 1076.9,235.8 1079.3,259.6 1075.3,258.8" fill="#1b1b1d" /><polygon points="1073.7,236.3 1076.3,236.9 1076.7,241.1 1074.1,240.5" fill="#7f7875" /><polygon points="1074.7,243.0 1076.6,243.3 1077.9,256.4 1076.1,256.1" fill="#7f7875" /><polygon points="1071.7,141.7 1076.5,141.6 1088.3,262.0 1083.7,261.2" fill="#2b2c2f" /><polygon points="1073.9,160.6 1078.1,160.6 1080.8,187.9 1076.6,187.6" fill="#1b1b1d" /><polygon points="1074.8,162.0 1077.5,162.0 1078.0,166.6 1075.2,166.6" fill="#7f7875" /><polygon points="1075.9,169.3 1077.8,169.3 1079.2,183.6 1077.3,183.5" fill="#7f7875" /><polygon points="1077.9,199.6 1082.0,200.0 1084.3,223.6 1080.2,223.1" fill="#1b1b1d" /><polygon points="1078.7,201.1 1081.4,201.4 1081.8,205.7 1079.1,205.3" fill="#7f7875" /><polygon points="1079.8,207.8 1081.6,208.0 1082.9,221.0 1081.1,220.8" fill="#7f7875" /><polygon points="1081.5,236.3 1085.6,236.9 1088.0,261.2 1084.0,260.3" fill="#1b1b1d" /><polygon points="1082.4,237.5 1085.0,238.1 1085.4,242.4 1082.8,241.7" fill="#7f7875" /><polygon points="1083.4,244.3 1085.3,244.6 1086.6,257.9 1084.7,257.6" fill="#7f7875" /><polygon points="1080.8,141.4 1090.6,141.2 1101.9,264.4 1092.5,262.7" fill="#2b2c2f" /><polygon points="1083.0,160.6 1092.1,160.6 1094.6,188.5 1085.6,188.1" fill="#1b1b1d" /><polygon points="1084.4,162.1 1090.9,162.1 1091.4,166.8 1084.9,166.7" fill="#7f7875" /><polygon points="1085.5,169.4 1087.4,169.5 1088.8,184.0 1086.8,183.9" fill="#7f7875" /><polygon points="1089.3,169.5 1091.3,169.5 1092.6,184.1 1090.7,184.0" fill="#7f7875" /><polygon points="1086.8,200.3 1095.8,200.9 1098.0,225.1 1089.1,224.1" fill="#1b1b1d" /><polygon points="1088.2,201.7 1094.6,202.4 1095.0,206.8 1088.6,206.0" fill="#7f7875" /><polygon points="1089.2,208.6 1091.1,208.8 1092.3,222.0 1090.4,221.8" fill="#7f7875" /><polygon points="1093.0,208.9 1094.9,209.1 1096.1,222.4 1094.2,222.2" fill="#7f7875" /><polygon points="1090.3,237.5 1099.2,238.8 1101.5,263.6 1092.7,261.9" fill="#1b1b1d" /><polygon points="1091.8,238.7 1098.0,240.0 1098.4,244.3 1092.2,243.0" fill="#7f7875" /><polygon points="1092.7,245.7 1094.6,246.0 1095.9,259.5 1094.0,259.2" fill="#7f7875" /><polygon points="1096.5,246.3 1098.4,246.5 1099.6,260.1 1097.7,259.8" fill="#7f7875" /><polygon points="1100.5,140.9 1111.1,140.6 1121.5,268.0 1111.4,266.1" fill="#2b2c2f" /><polygon points="1102.5,160.7 1112.5,160.7 1114.8,189.5 1105.0,189.0" fill="#1b1b1d" /><polygon points="1104.0,162.2 1111.3,162.3 1111.7,167.1 1104.4,167.0" fill="#7f7875" /><polygon points="1105.1,169.8 1107.2,169.8 1108.5,184.8 1106.4,184.7" fill="#7f7875" /><polygon points="1109.3,169.9 1111.4,169.9 1112.7,185.0 1110.6,184.9" fill="#7f7875" /><polygon points="1106.1,201.6 1115.9,202.4 1117.9,227.3 1108.2,226.2" fill="#1b1b1d" /><polygon points="1107.5,203.1 1114.7,203.9 1115.1,208.4 1107.9,207.5" fill="#7f7875" /><polygon points="1108.6,210.2 1110.7,210.4 1111.8,224.1 1109.7,223.9" fill="#7f7875" /><polygon points="1112.7,210.6 1114.8,210.8 1115.9,224.6 1113.9,224.3" fill="#7f7875" /><polygon points="1109.4,240.1 1119.1,241.4 1121.1,267.1 1111.6,265.3" fill="#1b1b1d" /><polygon points="1110.8,241.3 1117.9,242.7 1118.2,247.2 1111.2,245.7" fill="#7f7875" /><polygon points="1111.9,248.5 1113.9,248.9 1115.1,262.8 1113.0,262.5" fill="#7f7875" /><polygon points="1115.9,249.2 1118.0,249.5 1119.1,263.5 1117.1,263.2" fill="#7f7875" /><polygon points="1115.9,140.5 1127.4,140.1 1137.1,270.8 1126.1,268.8" fill="#2b2c2f" /><polygon points="1117.8,160.7 1128.7,160.8 1130.9,190.3 1120.1,189.8" fill="#1b1b1d" /><polygon points="1119.3,162.3 1127.5,162.4 1127.9,167.3 1119.7,167.2" fill="#7f7875" /><polygon points="1120.6,170.1 1122.8,170.1 1124.0,185.5 1121.8,185.4" fill="#7f7875" /><polygon points="1125.1,170.2 1127.4,170.2 1128.6,185.6 1126.3,185.6" fill="#7f7875" /><polygon points="1121.2,202.7 1131.8,203.5 1133.7,229.1 1123.2,227.9" fill="#1b1b1d" /><polygon points="1122.6,204.2 1130.7,205.1 1131.0,209.7 1123.0,208.8" fill="#7f7875" /><polygon points="1123.8,211.5 1126.1,211.7 1127.1,225.8 1124.9,225.5" fill="#7f7875" /><polygon points="1128.3,211.9 1130.5,212.1 1131.6,226.2 1129.4,226.0" fill="#7f7875" /><polygon points="1124.3,242.1 1134.8,243.6 1136.8,269.8 1126.3,267.9" fill="#1b1b1d" /><polygon points="1125.7,243.4 1133.6,244.9 1134.0,249.5 1126.1,247.9" fill="#7f7875" /><polygon points="1126.9,250.8 1129.1,251.1 1130.2,265.4 1128.0,265.0" fill="#7f7875" /><polygon points="1131.3,251.4 1133.5,251.8 1134.6,266.2 1132.4,265.8" fill="#7f7875" /><polygon points="1131.7,140.0 1144.2,139.7 1153.3,273.7 1141.3,271.5" fill="#2b2c2f" /><polygon points="1133.5,160.8 1145.4,160.8 1147.4,191.2 1135.7,190.6" fill="#1b1b1d" /><polygon points="1135.0,162.4 1144.2,162.5 1144.5,167.6 1135.3,167.4" fill="#7f7875" /><polygon points="1136.4,170.4 1138.9,170.4 1140.0,186.1 1137.5,186.0" fill="#7f7875" /><polygon points="1141.4,170.5 1143.8,170.5 1144.9,186.3 1142.5,186.2" fill="#7f7875" /><polygon points="1136.7,203.8 1148.3,204.6 1150.1,230.9 1138.5,229.6" fill="#1b1b1d" /><polygon points="1138.1,205.4 1147.1,206.3 1147.4,211.0 1138.4,210.0" fill="#7f7875" /><polygon points="1139.4,212.8 1141.9,213.1 1142.9,227.4 1140.5,227.2" fill="#7f7875" /><polygon points="1144.3,213.3 1146.8,213.5 1147.8,228.0 1145.3,227.7" fill="#7f7875" /><polygon points="1139.6,244.1 1151.1,245.8 1152.9,272.7 1141.5,270.6" fill="#1b1b1d" /><polygon points="1141.0,245.4 1149.9,247.1 1150.2,251.8 1141.3,250.1" fill="#7f7875" /><polygon points="1142.3,253.1 1144.7,253.4 1145.8,268.1 1143.4,267.7" fill="#7f7875" /><polygon points="1147.1,253.8 1149.6,254.2 1150.6,268.9 1148.2,268.5" fill="#7f7875" /><polygon points="1148.9,139.5 1161.7,139.2 1170.0,276.7 1157.8,274.5" fill="#2b2c2f" /><polygon points="1150.6,160.9 1162.7,160.9 1164.6,192.0 1152.6,191.4" fill="#1b1b1d" /><polygon points="1152.0,162.5 1161.5,162.6 1161.9,167.8 1152.4,167.6" fill="#7f7875" /><polygon points="1153.5,170.7 1156.0,170.7 1157.1,186.9 1154.5,186.8" fill="#7f7875" /><polygon points="1158.6,170.8 1161.1,170.8 1162.1,187.1 1159.6,187.0" fill="#7f7875" /><polygon points="1153.5,205.0 1165.5,205.9 1167.1,232.8 1155.2,231.4" fill="#1b1b1d" /><polygon points="1154.9,206.6 1164.3,207.5 1164.5,212.4 1155.2,211.3" fill="#7f7875" /><polygon points="1156.3,214.3 1158.8,214.5 1159.7,229.3 1157.3,229.0" fill="#7f7875" /><polygon points="1161.3,214.7 1163.8,214.9 1164.7,229.8 1162.2,229.5" fill="#7f7875" /><polygon points="1156.2,246.4 1168.0,248.0 1169.7,275.7 1158.0,273.5" fill="#1b1b1d" /><polygon points="1157.6,247.7 1166.8,249.4 1167.1,254.3 1157.9,252.5" fill="#7f7875" /><polygon points="1159.0,255.6 1161.4,255.9 1162.4,271.0 1159.9,270.5" fill="#7f7875" /><polygon points="1163.9,256.3 1166.4,256.7 1167.3,271.8 1164.8,271.4" fill="#7f7875" /><polygon points="1166.9,139.0 1173.8,138.8 1181.6,278.7 1175.0,277.6" fill="#2b2c2f" /><polygon points="1168.5,160.9 1174.8,160.9 1176.5,192.6 1170.3,192.3" fill="#1b1b1d" /><polygon points="1169.9,162.6 1173.6,162.6 1173.9,168.0 1170.2,167.9" fill="#7f7875" /><polygon points="1170.2,171.0 1171.5,171.0 1172.5,187.5 1171.1,187.5" fill="#7f7875" /><polygon points="1172.9,171.0 1174.3,171.1 1175.2,187.6 1173.8,187.6" fill="#7f7875" /><polygon points="1171.1,206.2 1177.3,206.7 1178.8,234.1 1172.7,233.4" fill="#1b1b1d" /><polygon points="1172.5,207.9 1176.1,208.4 1176.4,213.3 1172.8,212.8" fill="#7f7875" /><polygon points="1172.7,215.7 1174.1,215.8 1175.0,230.9 1173.6,230.7" fill="#7f7875" /><polygon points="1175.4,215.9 1176.8,216.0 1177.6,231.2 1176.3,231.0" fill="#7f7875" /><polygon points="1173.6,248.7 1179.7,249.6 1181.3,277.8 1175.3,276.6" fill="#1b1b1d" /><polygon points="1175.0,250.1 1178.5,251.0 1178.8,255.9 1175.3,255.0" fill="#7f7875" /><polygon points="1175.2,258.0 1176.5,258.2 1177.4,273.6 1176.1,273.3" fill="#7f7875" /><polygon points="1177.9,258.4 1179.2,258.6 1180.1,274.0 1178.7,273.8" fill="#7f7875" /><polygon points="1183.2,138.6 1201.0,138.1 1207.7,283.4 1190.6,280.4" fill="#2b2c2f" /><polygon points="1184.7,161.0 1201.8,161.0 1203.3,193.9 1186.4,193.1" fill="#1b1b1d" /><polygon points="1186.1,162.7 1200.6,162.8 1200.8,168.4 1186.4,168.1" fill="#7f7875" /><polygon points="1188.5,171.3 1192.0,171.4 1192.8,188.4 1189.3,188.2" fill="#7f7875" /><polygon points="1195.5,171.4 1199.0,171.5 1199.8,188.7 1196.3,188.5" fill="#7f7875" /><polygon points="1187.1,207.3 1204.0,208.6 1205.3,237.1 1188.6,235.1" fill="#1b1b1d" /><polygon points="1188.5,209.0 1202.7,210.3 1203.0,215.4 1188.8,214.0" fill="#7f7875" /><polygon points="1190.8,217.2 1194.3,217.5 1195.1,233.0 1191.6,232.7" fill="#7f7875" /><polygon points="1197.8,217.8 1201.2,218.1 1202.0,233.8 1198.5,233.4" fill="#7f7875" /><polygon points="1189.4,250.8 1206.0,253.2 1207.4,282.4 1190.9,279.4" fill="#1b1b1d" /><polygon points="1190.8,252.3 1204.8,254.6 1205.0,259.7 1191.0,257.3" fill="#7f7875" /><polygon points="1193.0,260.6 1196.5,261.1 1197.2,277.0 1193.8,276.4" fill="#7f7875" /><polygon points="1199.9,261.6 1203.3,262.2 1204.1,278.2 1200.7,277.6" fill="#7f7875" /><polygon points="1207.6,137.9 1222.0,137.5 1227.8,287.0 1214.0,284.6" fill="#2b2c2f" /><polygon points="1208.9,161.1 1222.6,161.1 1224.0,195.0 1210.4,194.3" fill="#1b1b1d" /><polygon points="1210.3,162.8 1221.4,162.9 1221.6,168.6 1210.6,168.4" fill="#7f7875" /><polygon points="1212.0,171.7 1214.8,171.8 1215.5,189.3 1212.7,189.2" fill="#7f7875" /><polygon points="1217.7,171.8 1220.5,171.9 1221.2,189.6 1218.4,189.5" fill="#7f7875" /><polygon points="1211.0,209.0 1224.5,210.0 1225.7,239.3 1212.3,237.8" fill="#1b1b1d" /><polygon points="1212.4,210.8 1223.3,211.8 1223.5,217.1 1212.6,216.0" fill="#7f7875" /><polygon points="1214.0,219.1 1216.8,219.4 1217.5,235.4 1214.7,235.1" fill="#7f7875" /><polygon points="1219.6,219.6 1222.4,219.9 1223.1,236.0 1220.3,235.7" fill="#7f7875" /><polygon points="1213.0,254.0 1226.3,255.9 1227.5,286.0 1214.3,283.5" fill="#1b1b1d" /><polygon points="1214.4,255.5 1225.1,257.4 1225.3,262.7 1214.6,260.7" fill="#7f7875" /><polygon points="1215.9,264.0 1218.7,264.4 1219.4,280.8 1216.6,280.3" fill="#7f7875" /><polygon points="1221.5,264.8 1224.2,265.3 1224.9,281.7 1222.1,281.3" fill="#7f7875" /><polygon points="1228.7,137.3 1244.0,136.9 1248.9,290.8 1234.3,288.2" fill="#2b2c2f" /><polygon points="1229.9,161.1 1244.5,161.2 1245.6,196.0 1231.2,195.3" fill="#1b1b1d" /><polygon points="1231.3,163.0 1243.3,163.1 1243.4,168.9 1231.5,168.7" fill="#7f7875" /><polygon points="1233.0,172.1 1236.1,172.2 1236.7,190.2 1233.7,190.1" fill="#7f7875" /><polygon points="1239.1,172.2 1242.1,172.3 1242.7,190.5 1239.7,190.4" fill="#7f7875" /><polygon points="1231.7,210.5 1246.1,211.5 1247.1,241.7 1232.8,240.1" fill="#1b1b1d" /><polygon points="1233.1,212.3 1244.9,213.4 1245.0,218.8 1233.3,217.6" fill="#7f7875" /><polygon points="1234.8,220.9 1237.8,221.2 1238.3,237.7 1235.4,237.4" fill="#7f7875" /><polygon points="1240.8,221.4 1243.7,221.7 1244.3,238.3 1241.3,238.0" fill="#7f7875" /><polygon points="1233.4,256.8 1247.6,258.8 1248.6,289.7 1234.5,287.1" fill="#1b1b1d" /><polygon points="1234.8,258.3 1246.4,260.3 1246.5,265.7 1235.0,263.6" fill="#7f7875" /><polygon points="1236.4,267.1 1239.4,267.5 1240.0,284.3 1237.0,283.8" fill="#7f7875" /><polygon points="1242.3,268.0 1245.3,268.4 1245.8,285.4 1242.9,284.9" fill="#7f7875" /><polygon points="1251.7,136.7 1260.0,136.4 1264.3,293.6 1256.3,292.1" fill="#2b2c2f" /><polygon points="1252.7,161.2 1260.4,161.3 1261.4,196.8 1253.8,196.4" fill="#1b1b1d" /><polygon points="1254.1,163.1 1259.1,163.2 1259.3,169.2 1254.3,169.1" fill="#7f7875" /><polygon points="1254.4,172.5 1256.1,172.6 1256.6,191.1 1255.0,191.0" fill="#7f7875" /><polygon points="1257.7,172.6 1259.4,172.6 1259.9,191.2 1258.2,191.2" fill="#7f7875" /><polygon points="1254.2,212.1 1261.8,212.6 1262.6,243.5 1255.2,242.6" fill="#1b1b1d" /><polygon points="1255.6,213.9 1260.5,214.5 1260.7,220.1 1255.8,219.4" fill="#7f7875" /><polygon points="1255.9,222.7 1257.5,222.8 1258.0,239.8 1256.4,239.6" fill="#7f7875" /><polygon points="1259.1,223.0 1260.7,223.1 1261.2,240.1 1259.6,240.0" fill="#7f7875" /><polygon points="1255.7,259.8 1263.1,260.9 1264.0,292.5 1256.6,291.1" fill="#1b1b1d" /><polygon points="1257.0,261.3 1261.8,262.4 1262.0,268.0 1257.2,266.8" fill="#7f7875" /><polygon points="1257.3,270.2 1258.9,270.4 1259.4,287.7 1257.8,287.4" fill="#7f7875" /><polygon points="1260.5,270.6 1262.1,270.9 1262.6,288.2 1261.0,288.0" fill="#7f7875" /><polygon points="1267.3,136.2 1284.8,135.7 1288.1,297.8 1271.3,294.8" fill="#2b2c2f" /><polygon points="1268.2,161.3 1285.0,161.4 1285.8,198.0 1269.1,197.2" fill="#1b1b1d" /><polygon points="1269.6,163.2 1283.8,163.3 1283.9,169.5 1269.7,169.3" fill="#7f7875" /><polygon points="1271.7,172.8 1275.2,172.9 1275.6,191.9 1272.1,191.7" fill="#7f7875" /><polygon points="1278.6,173.0 1282.1,173.0 1282.5,192.2 1279.0,192.0" fill="#7f7875" /><polygon points="1269.5,213.1 1286.1,214.3 1286.7,246.1 1270.3,244.3" fill="#1b1b1d" /><polygon points="1270.9,215.1 1284.8,216.3 1284.9,222.0 1271.0,220.6" fill="#7f7875" /><polygon points="1272.9,224.1 1276.3,224.4 1276.7,241.8 1273.3,241.4" fill="#7f7875" /><polygon points="1279.8,224.7 1283.2,225.0 1283.6,242.5 1280.2,242.2" fill="#7f7875" /><polygon points="1270.8,261.8 1287.1,264.1 1287.7,296.7 1271.6,293.7" fill="#1b1b1d" /><polygon points="1272.1,263.4 1285.8,265.7 1285.9,271.4 1272.2,269.0" fill="#7f7875" /><polygon points="1274.1,272.7 1277.5,273.2 1277.9,290.9 1274.5,290.3" fill="#7f7875" /><polygon points="1280.8,273.7 1284.2,274.2 1284.6,292.0 1281.2,291.5" fill="#7f7875" /><polygon points="1306.8,135.1 1325.0,134.6 1326.6,304.8 1309.2,301.6" fill="#2b2c2f" /><polygon points="1307.5,161.4 1325.0,161.5 1325.3,200.0 1308.0,199.1" fill="#1b1b1d" /><polygon points="1308.8,163.4 1323.7,163.6 1323.7,170.1 1308.9,169.8" fill="#7f7875" /><polygon points="1311.0,173.6 1314.6,173.6 1314.8,193.6 1311.2,193.4" fill="#7f7875" /><polygon points="1318.2,173.7 1321.8,173.8 1322.0,193.9 1318.4,193.7" fill="#7f7875" /><polygon points="1308.2,215.9 1325.5,217.1 1325.8,250.5 1308.7,248.5" fill="#1b1b1d" /><polygon points="1309.6,217.9 1324.2,219.2 1324.3,225.2 1309.7,223.7" fill="#7f7875" /><polygon points="1311.7,227.4 1315.2,227.7 1315.4,245.9 1311.9,245.6" fill="#7f7875" /><polygon points="1318.8,228.0 1322.3,228.3 1322.5,246.7 1319.0,246.3" fill="#7f7875" /><polygon points="1309.0,267.0 1326.0,269.3 1326.3,303.6 1309.4,300.5" fill="#1b1b1d" /><polygon points="1310.3,268.6 1324.7,271.0 1324.7,277.0 1310.4,274.5" fill="#7f7875" /><polygon points="1312.3,278.4 1315.8,278.9 1316.1,297.5 1312.6,296.9" fill="#7f7875" /><polygon points="1319.4,279.4 1322.9,279.9 1323.1,298.7 1319.6,298.1" fill="#7f7875" /><polygon points="1334.0,134.4 1343.6,134.1 1344.4,308.0 1335.2,306.3" fill="#2b2c2f" /><polygon points="1334.5,161.5 1343.4,161.6 1343.6,200.9 1334.8,200.4" fill="#1b1b1d" /><polygon points="1335.8,163.6 1342.1,163.7 1342.2,170.3 1335.9,170.2" fill="#7f7875" /><polygon points="1336.2,174.0 1338.1,174.1 1338.2,194.6 1336.3,194.5" fill="#7f7875" /><polygon points="1340.0,174.1 1341.9,174.1 1342.0,194.7 1340.1,194.6" fill="#7f7875" /><polygon points="1334.9,217.7 1343.7,218.4 1343.9,252.5 1335.1,251.5" fill="#1b1b1d" /><polygon points="1336.2,219.8 1342.4,220.5 1342.4,226.6 1336.3,225.9" fill="#7f7875" /><polygon points="1336.6,229.5 1338.4,229.6 1338.6,248.4 1336.7,248.2" fill="#7f7875" /><polygon points="1340.3,229.8 1342.2,230.0 1342.3,248.8 1340.4,248.6" fill="#7f7875" /><polygon points="1335.3,270.5 1344.0,271.8 1344.1,306.7 1335.5,305.1" fill="#1b1b1d" /><polygon points="1336.6,272.2 1342.7,273.5 1342.7,279.6 1336.6,278.3" fill="#7f7875" /><polygon points="1336.9,282.0 1338.8,282.3 1338.9,301.4 1337.0,301.1" fill="#7f7875" /><polygon points="1340.6,282.6 1342.5,282.8 1342.6,302.0 1340.7,301.7" fill="#7f7875" /><polygon points="1019.1,185.3 1364.0,202.8 1364.0,210.9 1019.8,190.2" fill="#acada8" /><polygon points="1023.5,217.9 1364.0,256.5 1364.0,264.6 1024.1,222.7" fill="#acada8" /><polygon points="1068.6,222.4 1092.9,225.1 1093.6,233.1 1069.4,230.1" fill="#2f2f31" /><path d="M1364 133V312" stroke="#3a2015" stroke-width="1.2" fill="none"/><polygon points="1028.0,254.0 1364.0,312.0 1364.0,356.0 1031.5,283.0" fill="#38383a" /><polygon points="1364.0,312.0 1511.0,279.0 1511.0,315.0 1364.0,356.0" fill="#303032" /><path d="M1028.6 258.8L1364 319.3L1511 285.0M1029.2 263.7L1364 326.7L1511 291.0M1029.8 268.5L1364 334.0L1511 297.0M1030.3 273.3L1364 341.3L1511 303.0M1030.9 278.2L1364 348.7L1511 309.0" stroke="#3c3c3e" stroke-width="0.6" fill="none"/><polygon points="1229.0,298.0 1232.5,298.0 1232.5,301.5 1229.0,301.5" fill="#1f1f20" /><polygon points="1249.0,303.0 1252.5,303.0 1252.5,306.5 1249.0,306.5" fill="#1f1f20" /><polygon points="1283.0,310.0 1286.5,310.0 1286.5,313.5 1283.0,313.5" fill="#1f1f20" /><polygon points="1346.0,326.0 1349.5,326.0 1349.5,329.5 1346.0,329.5" fill="#1f1f20" /><polygon points="1383.0,318.0 1386.5,318.0 1386.5,321.5 1383.0,321.5" fill="#1f1f20" /><polygon points="1445.0,303.0 1448.5,303.0 1448.5,306.5 1445.0,306.5" fill="#1f1f20" /><polygon points="1401.0,323.0 1430.0,300.0 1444.0,292.0 1450.0,300.0 1418.0,316.0" fill="#4a4a4c" /><polygon points="1055.0,268.0 1075.0,262.0 1086.0,267.0 1083.0,276.0 1058.0,281.0" fill="#4c4c4e" /><path d="M1405 321L1440 297M1409 320L1443 299M1413 319L1446 301" stroke="#5c5c5e" stroke-width="0.7"/>
</g></svg>
<div class="a" style="left:941px;top:37px;width:32px;height:32px;background:#3d3d3d"></div>
<svg style="left:941px;top:37px" width="32" height="32" viewBox="0 0 32 32"><g fill="none" stroke="#a0a0a0" stroke-width="1.4"><path d="M4 10V4H10M22 4H28V10M28 22V28H22M10 28H4V22"/></g><path d="M16 9L22 12.5V19.5L16 23L10 19.5V12.5Z" fill="#9a9a9a"/></svg>
<svg style="left:0;top:0" width="1832" height="816" viewBox="0 0 1832 816">
<g stroke-width="2.2" fill="none"><path d="M991 295V272" stroke="#1a1aa0"/><path d="M991 295L972 301" stroke="#a01818"/><path d="M991 295L1010 300" stroke="#1a9a1a"/></g>
<path d="M988 274L991 266L994 274Z" fill="#1a1aa0"/><path d="M975 297.5L968 302.5L976 303Z" fill="#a01818"/><path d="M1007 296L1016 301L1007 303.5Z" fill="#1a9a1a"/>
<circle cx="991" cy="295" r="3.6" fill="#777"/>
<text x="989" y="261" font-family="Liberation Sans" font-size="9" fill="#1a1aa0">Z</text>
<text x="963" y="305" font-family="Liberation Sans" font-size="9" fill="#a01818">X</text>
<text x="1022" y="304" font-family="Liberation Sans" font-size="9" fill="#1a9a1a">Y</text>
<path d="M1348 177V194M1348 194H1341" stroke-width="1.2" fill="none" stroke="#2020c0"/><path d="M1348 194H1358" stroke-width="1.2" stroke="#20a020"/><path d="M1341 194H1348" stroke-width="1.2" stroke="#c02020"/>
<path d="M1718 81.3L1758.2 86.2L1753.8 134.3L1723 157.8L1684.7 135.7L1679.9 86.8Z" fill="#9b9b9b" stroke="#333" stroke-width="0.8"/>
<path d="M1679.9 86.8L1723 93L1758.2 86.2M1723 93V157.8" stroke="#333" stroke-width="1" fill="none"/>
<text x="0" y="0" font-family="Liberation Sans" font-size="11" fill="#6a6a6a" transform="translate(1689 119) rotate(15) scale(0.72 1.3)">Справа</text>
<text x="0" y="0" font-family="Liberation Sans" font-size="11" fill="#6a6a6a" transform="translate(1734 131) rotate(-24) scale(0.68 1.35)">Сзади</text>
</svg>

<div class="a" style="left:941px;top:425px;width:846px;height:37px;background:#3d3d3d;border-radius:5px 5px 0 0"></div>
<div class="a" style="left:1365px;top:431px;width:42px;height:2px;background:#2e6272"></div>
<svg style="left:1616px;top:435px" width="20" height="20" viewBox="0 0 20 20"><g fill="none" stroke="#9c9c9c" stroke-width="1.6"><path d="M12 4V2H1.5V12H4"/><rect x="5" y="6.5" width="12.5" height="11" rx="1.5"/><path d="M5 10H12.5"/></g></svg>
<svg style="left:1652px;top:436px" width="18" height="19" viewBox="0 0 18 19"><g fill="#9c9c9c"><rect x="2" y="0.5" width="14" height="1.8"/><rect x="2" y="16.5" width="14" height="1.8"/><path d="M9 3L12 6.5H10V12H12L9 15.5L6 12H8V6.5H6Z"/></g></svg>
<svg style="left:1686px;top:436px" width="18" height="19" viewBox="0 0 18 19"><g fill="#9c9c9c"><rect x="1.5" y="7.5" width="14.5" height="1.5"/><rect x="1.5" y="10" width="14.5" height="1.5"/><path d="M8 0H9.5V4H11.5L8.75 6.8L6 4H8Z"/><path d="M8 19H9.5V15H11.5L8.75 12.2L6 15H8Z"/></g></svg>
<svg style="left:1717px;top:435px" width="22" height="21" viewBox="0 0 24 23"><path fill="#9c9c9c" d="M19.4 13a7.7 7.7 0 0 0 0-2l2.1-1.6-2-3.5-2.5 1a7 7 0 0 0-1.7-1L15 3h-4l-.4 2.6a7 7 0 0 0-1.7 1l-2.5-1-2 3.5L6.6 11a7.7 7.7 0 0 0 0 2l-2.1 1.6 2 3.5 2.5-1a7 7 0 0 0 1.7 1L11 21h4l.4-2.6a7 7 0 0 0 1.7-1l2.5 1 2-3.5zM13 15.5a3.5 3.5 0 1 1 0-7 3.5 3.5 0 0 1 0 7z" transform="translate(-1 0)"/></svg>
<svg style="left:1757px;top:441px" width="12" height="8" viewBox="0 0 12 8"><path d="M1 1.5L6 6.5L11 1.5" stroke="#9c9c9c" stroke-width="1.8" fill="none"/></svg>
<div class="a" style="left:941px;top:462px;width:846px;height:32px;background:#434343"></div>
<div class="a" style="left:941px;top:462px;width:60px;height:32px;background:#939393"></div><div class="a" style="left:960px;top:472px;width:15px;height:14px;background:#2e6f86;border-radius:3px"></div>
<div class="a" style="left:1090px;top:462px;width:1px;height:32px;background:#3a3a3a"></div>
<div class="a" style="left:1377px;top:462px;width:1px;height:32px;background:#3a3a3a"></div>
<div class="a" style="left:1569px;top:462px;width:1px;height:32px;background:#3a3a3a"></div>
<div class="pt" style="left:1165px;top:471px;font-size:12px;color:#9a9a9a;letter-spacing:-0.3px">Модель A)</div>
<div class="pt" style="left:1393px;top:471px;font-size:12px;color:#9a9a9a;letter-spacing:-0.3px">Элемент (Модель B)</div>
<div class="pt" style="left:1585px;top:471px;font-size:12px;color:#9a9a9a;letter-spacing:-0.3px">GUID элемента (Модель A)</div>
<div class="a" style="left:941px;top:494px;width:846px;height:310px;background:#9a9a9a"></div>
<div class="a" style="left:1610px;top:502px;font-size:14.2px;color:#6c6c6c">Отсутствуют данные</div>
<div class="a" style="left:941px;top:804px;width:846px;height:8px;background:#4a4a4a;border-radius:0 0 5px 5px"></div>
<div class="a" style="left:941px;top:804px;width:438px;height:8px;background:#2e5f70;border-radius:0 0 0 5px"></div>

<div class="a" style="left:1795px;top:37px;width:36px;height:773px;background:#3d3d3d"></div>
<div class="a" style="left:1795px;top:127.5px;width:36px;height:2px;background:#2f2f2f"></div>
<div class="a" style="left:1795px;top:397.5px;width:36px;height:1.5px;background:#2f2f2f"></div>
<div class="a" style="left:1795px;top:447px;width:36px;height:1.5px;background:#2f2f2f"></div>
<div class="a" style="left:1795px;top:627px;width:36px;height:1.5px;background:#2f2f2f"></div>
<div class="a" style="left:1795px;top:720.5px;width:36px;height:1.5px;background:#2f2f2f"></div>
<div class="a" style="left:1797px;top:637px;width:32px;height:32px;background:#5b5b5b"></div>
<div class="a" style="left:1797px;top:681px;width:32px;height:32px;background:#5b5b5b"></div>
<svg style="left:1795px;top:37px" width="37" height="780" viewBox="0 0 37 780">
<g fill="none" stroke="#9c9c9c" stroke-width="1.3" stroke-linejoin="round" stroke-linecap="round">
<path d="M18.3 35V19M18.3 25.5L14.5 22M18.3 28L22.5 24.5M14.5 29.4H11Q6.8 29.4 6.8 25Q6.8 21.3 10.6 20.8Q11 13 18.3 12.5Q25.6 13 26 20.8Q29.8 21.3 29.8 25Q29.8 29.4 25.6 29.4H22"/>
<path d="M28.8 62V55H5.1V72.3H13V75.2H15"/>
<path d="M15 68V63.8H19M27 63.8H30.9V68M30.9 76.5V80.9H27M19 80.9H15V76.5"/>
<rect x="4.7" y="112.1" width="26.4" height="8.1"/>
<path d="M10 120V116.5M13.5 120V118M16.5 120V117M20 120V118M23 120V116.5M26.5 120V118"/>
<path d="M12.5 157.5H31.3L23 163.5H4.4Z"/>
<path d="M6.3 199.4H22.6V215.8H6.3ZM13.2 194.2H29.7V210.4H13.2ZM6.3 199.4L13.2 194.2M22.6 199.4L29.7 194.2M22.6 215.8L29.7 210.4M6.3 215.8L13.2 210.4" stroke-width="1.1"/>
<path d="M4.2 242.5L8 238H31V259.6H4.2Z"/>
<path d="M16.5 239V259M5 247.4H31" stroke-dasharray="2.2 1.8"/>
<path d="M22.6 259.6V254.5H31"/>
<circle cx="17.9" cy="292.9" r="8.2" stroke-width="1.8"/>
<path d="M17.9 282V284.5M17.9 301.3V303.8M7 292.9H9.5M26.3 292.9H28.8" stroke-width="1.8"/>
<circle cx="17.9" cy="336.9" r="12.6"/>
<path d="M12.2 343.5V330.5H17.5Q19 333.5 21 333Q23 332.5 26.3 333V340Q23 339.5 21 340Q19 340.5 17.5 337.5H12.2"/>
<path d="M3 389.8L33 373M3.5 399.6L33 383M12.5 377.7L31.6 388.5M4 383.8L23 395.2"/>
<g stroke-dasharray="2.2 2" stroke-width="1.1"><rect x="6.4" y="423.5" width="23.3" height="23.1"/><rect x="6.4" y="467" width="23.3" height="23.4"/><rect x="6.4" y="511" width="23.3" height="23.6"/><rect x="6.4" y="555" width="23.3" height="23.7"/></g>
<path d="M17.9 427.5L23.5 430.7V438L17.9 441.2L12.3 438V430.7ZM12.3 430.7L17.9 433.9L23.5 430.7M17.9 433.9V441.2" stroke-width="1.1"/>
<path d="M17.9 659.8V656M17.9 659.8L14.5 663M17.9 659.8L21.3 663" stroke="#a5a5a5" stroke-width="0.9"/>
</g>
<path d="M23 147.1V167L13.2 174.7V155Z" fill="#9c9c9c"/><path d="M15.5 199.4L20 194.2V210.4L15.5 215.8Z" fill="#9c9c9c"/><path d="M22.9 68.7L27 71V75.7L22.9 78L18.8 75.7V71Z" fill="#9c9c9c"/>
<rect x="4.7" y="122.2" width="26.4" height="1.7" fill="#9c9c9c"/>
<path d="M8 260H31.8V241L32.5 241V261H8Z" fill="#9c9c9c"/>
<circle cx="17.9" cy="292.9" r="4" fill="#9c9c9c"/>
<text x="4" y="383" font-family="Liberation Sans" font-size="7" fill="#9c9c9c">1</text><text x="13" y="376" font-family="Liberation Sans" font-size="7" fill="#9c9c9c">2</text>
<path d="M10.9 478.7Q17.9 470.5 25.7 478.7Q17.9 487 10.9 478.7Z" fill="#9c9c9c"/><circle cx="17.9" cy="478.7" r="2.9" fill="#3d3d3d"/><circle cx="17.9" cy="478.7" r="1.7" fill="#9c9c9c"/>
<path d="M10.9 522.5Q17.9 514.3 25.7 522.5Q17.9 530.8 10.9 522.5Z" fill="#9c9c9c"/><circle cx="17.9" cy="522.5" r="2.6" fill="#3d3d3d"/><path d="M11.5 515.5L24.5 529.5" stroke="#3d3d3d" stroke-width="2"/><path d="M11 514.5L24.8 528.8" stroke="#9c9c9c" stroke-width="1.1"/>
<rect x="15.9" y="564.8" width="16.1" height="15.9" fill="#8c8c8c"/>
<path d="M19.5 568.5L28.5 577.5M28.5 568.5L19.5 577.5" stroke="#333" stroke-width="1.3"/>
<path d="M6.5 607.5L14 604.3L29.3 607.5V623L17.9 628L9 620Z" fill="#a2a2a2" stroke="#8a8a8a" stroke-width="0.8"/>
<path d="M6.5 607.5L17.9 611L29.3 607.5L29.3 623L17.9 628Z" fill="#a0a0a0"/>
<path d="M17.9 611L29.3 607.5V623L17.9 628Z" fill="#6e6e6e"/>
<path d="M6.5 607.5L17.9 611L29.3 607.5M17.9 611V628" stroke="#8d8d8d" stroke-width="1" fill="none"/>
<g fill="none" stroke="#a5a5a5" stroke-width="1.6"><ellipse cx="18.2" cy="659.8" rx="11.8" ry="5.8"/><ellipse cx="17.9" cy="659.9" rx="5.4" ry="11.1"/></g>
<path d="M3 765V771H9Z" fill="#9c9c9c"/>
</svg>

<div class="a" style="left:665px;top:327px;width:500px;height:158px;background:#fefefe;box-shadow:0 0 3px rgba(0,0,0,0.2)"></div>
<div class="a" style="left:665px;top:327px;width:500px;height:44px;background:#525252"></div>
<div class="a" style="left:672px;top:340px;font-size:14px;color:#f2f2f2">Проверка по формуле</div>
<svg style="left:1139px;top:341px" width="15" height="15" viewBox="0 0 15 15"><path d="M1 1L14 14M14 1L1 14" stroke="#e8e8e8" stroke-width="2"/></svg>
<div class="a" style="left:753px;top:371px;width:308px;height:85px;background:#fdfdfd"></div>
<div class="a" style="left:753px;top:371px;width:308px;height:14px;overflow:hidden"><div class="a" style="left:37px;top:-8px;font-size:14px;color:#f6f6f6;white-space:nowrap">Очистить правило "Проверка по формуле"?</div></div>
<div class="a" style="left:861px;top:420px;width:91px;height:28px;background:#f9f9f9;border-radius:3px"></div>
<div class="a" style="left:961px;top:420px;width:96px;height:28px;background:#f9f9f9;border-radius:3px"></div>
<div class="a" style="left:689px;top:406px;width:15px;height:15px;background:#3a8cae;border-radius:2px"></div>
<svg style="left:689px;top:406px" width="15" height="15" viewBox="0 0 15 15"><path d="M3 7.5L6 10.5L12 4" stroke="#fff" stroke-width="1.8" fill="none"/></svg>
<div class="a" style="left:717px;top:406px;font-size:14px;color:#3a3a3a">Ограничение расчета коллизий</div>
<div class="a" style="left:932px;top:405px;font-size:12.5px;color:#222">10000</div>
<div class="a" style="left:932px;top:420px;width:213px;height:1.2px;background:#7a7a7a"></div>
<div class="a" style="left:1127px;top:402px;width:18px;height:18px;background:#e6e6e6;border-radius:1px"></div>
<svg style="left:1127px;top:402px" width="18" height="18" viewBox="0 0 18 18"><path d="M6 7L9 4L12 7M6 11L9 14L12 11" stroke="#666" stroke-width="1.1" fill="none"/></svg>
<div class="a" style="left:1042px;top:438px;width:115px;height:36px;background:#3b8eae;border-radius:5px"></div>
<div class="a" style="left:1042px;top:448px;width:115px;text-align:center;font-size:14px;color:#f4f4f4;letter-spacing:1.1px">Сохранить</div>

</body></html>
